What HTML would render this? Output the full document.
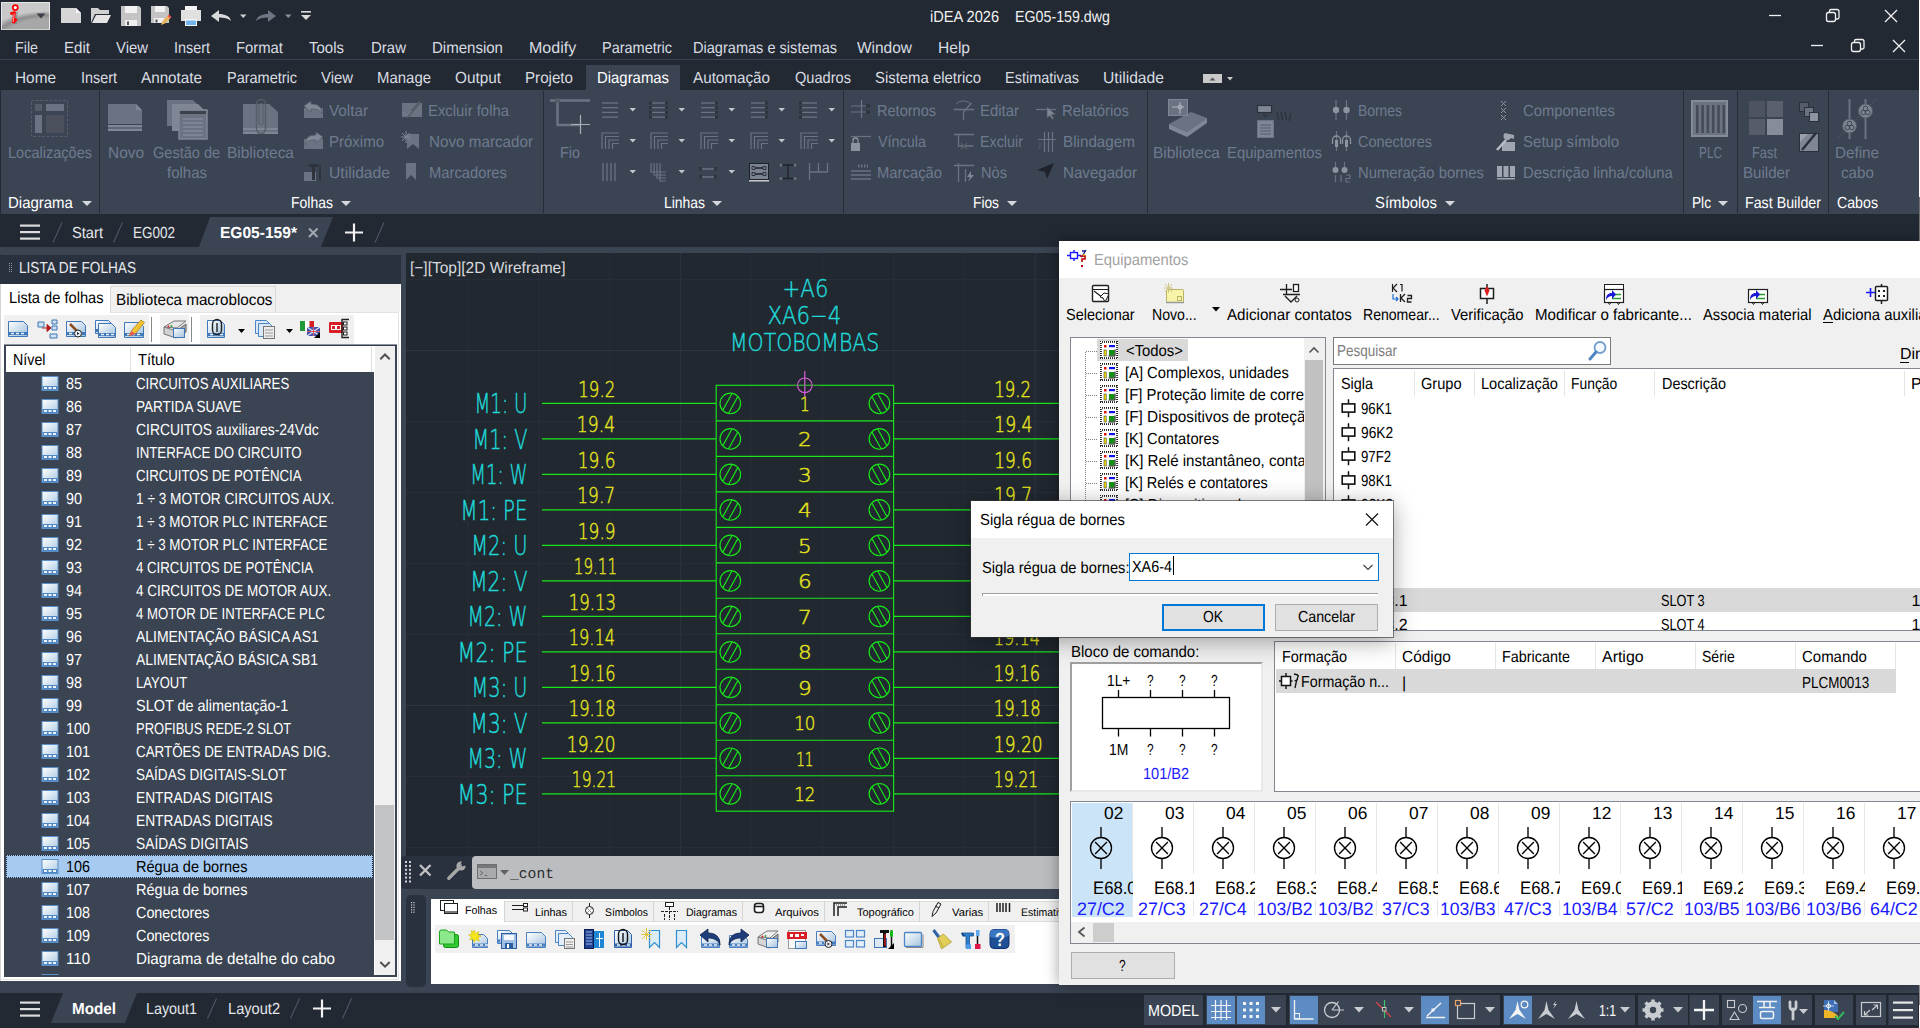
<!DOCTYPE html>
<html lang="pt"><head><meta charset="utf-8"><title>iDEA 2026 - EG05-159.dwg</title>
<style>
html,body{margin:0;padding:0;background:#222933;}
body{width:1920px;height:1028px;overflow:hidden;position:relative;font-family:"Liberation Sans",sans-serif;}
#app{position:absolute;left:0;top:0;width:1920px;height:1028px;overflow:hidden;background:#222933;}
#app div,#app svg,#app span.t{position:absolute;box-sizing:border-box;}
span.t{white-space:pre;display:block;transform-origin:0 50%;text-rendering:geometricPrecision;}
svg{overflow:visible;}
svg text{font-family:"Liberation Sans",sans-serif;}
svg text.cad{font-family:"DejaVu Sans","Liberation Sans",sans-serif;font-weight:200;}
</style></head><body><div id="app">
<div style="left:0px;top:0px;width:1920px;height:1028px;background:#222933;"></div>
<div style="left:1px;top:2px;width:49px;height:27.500px;border:1px solid #e6e6e6;border-bottom-color:#cfcfcf;background:radial-gradient(ellipse 60px 26px at 46px 34px,#a6a6a6 0%,#a8a8a8 70%,#8e8e8e 84%,#c9c9c9 100%),#dedede;"></div>
<svg style="left:0px;top:0px;" width="320" height="34" viewBox="0 0 320 34">
<path d="M12 14.5l4.5 -1.2-1.2 10.5" fill="none" stroke="#707070" stroke-width="3" opacity=".45"/>
<circle cx="15.3" cy="7.6" r="2.5" fill="#ffffff" stroke="#ff0000" stroke-width="1.7"/>
<path d="M10.3 13.8l4.2 -1.3-1.3 10.7M13.2 23l3.300-4.200" fill="none" stroke="#ff0000" stroke-width="2.6" stroke-linejoin="round"/><path d="M14.2 13.5l-1 8.5" stroke="#ffd0d0" stroke-width=".8"/>
<path d="M36.5 13.5h9l-4.5 5z" fill="#3a3f4a"/>
<!-- new -->
<path d="M61 8h15l5 5v10h-20z" fill="#d6d6d6"/><path d="M76 8v5h5z" fill="#f4f4f4"/>
<!-- open -->
<path d="M91 8h7l2 2h9v4h-14l-4 9z" fill="#d0d0d0"/><path d="M96 15h15l-4 8h-15z" fill="#e4e4e4"/>
<!-- save -->
<path d="M121 6h18l2 2v18h-20z" fill="#c4c4c4"/><rect x="125" y="6" width="12" height="7" fill="#f2f2f2"/><rect x="125" y="20" width="12" height="6" fill="#efefef"/><rect x="127" y="21.5" width="2" height="3.5" fill="#555"/>
<!-- save as -->
<path d="M151 6h16l2 2v15h-18z" fill="#c4c4c4"/><rect x="155" y="6" width="10" height="6" fill="#f2f2f2"/><rect x="154" y="18" width="10" height="5" fill="#efefef"/><rect x="155.500" y="19.500" width="2" height="3" fill="#555"/>
<path d="M161 25l1.500-4 6-6 2.500 2.500-6 6z" fill="#e9b660"/><path d="M167.500 16l1.500-1.500 2.500 2.500-1.500 1.500z" fill="#e8504c"/>
<!-- print -->
<rect x="185" y="6" width="12" height="5" fill="#f4f4f4"/><path d="M181 10h20v11h-20z" fill="#e0e0e0"/><rect x="185" y="19" width="12" height="7" fill="#f6f6f6"/><rect x="186" y="20.500" width="10" height="4.500" fill="#6fb4f0"/>
<!-- undo -->
<path d="M211 16l8-6v4c6 0 11 2 12 7-3-3-7-3.500-12-3.500v4.500z" fill="#d9d9d9"/>
<path d="M240 14.500h6.500l-3.250 3.500z" fill="#cfcfcf"/>
<!-- redo -->
<path d="M276 16l-8-6v4c-6 0-11 2-12 7 3-3 7-3.500 12-3.500v4.500z" fill="#6e7683"/>
<path d="M285 14.500h6.500l-3.250 3.500z" fill="#8a909b"/>
<!-- customize -->
<rect x="301" y="11" width="10" height="1.600" fill="#d9d9d9"/><path d="M301 15h10l-5 5z" fill="#d9d9d9"/>
</svg>
<span class="t" style="left:930px;top:10px;font-size:16px;line-height:16px;color:#f0f0f0;transform:scaleX(0.913);">iDEA 2026</span>
<span class="t" style="left:1015px;top:10px;font-size:16px;line-height:16px;color:#f0f0f0;transform:scaleX(0.89);">EG05-159.dwg</span>
<svg style="left:1760px;top:0px;" width="160" height="62" viewBox="0 0 160 62"><g stroke="#f2f2f2" stroke-width="1.3" fill="none">
<path d="M9 15.500h12"/>
<rect x="66.500" y="12.500" width="9" height="9" rx="2"/><path d="M69.500 12.500v-1.500a1.500 1.500 0 0 1 1.500-1.500h6a2 2 0 0 1 2 2v6a1.500 1.500 0 0 1 -1.500 1.500h-1.500"/>
<path d="M125 10l12 12M137 10l-12 12"/>
<path d="M51 45.500h12"/>
<rect x="91.500" y="42.500" width="9" height="9" rx="2"/><path d="M94.500 42.500v-1.500a1.500 1.500 0 0 1 1.500-1.500h6a2 2 0 0 1 2 2v6a1.500 1.500 0 0 1 -1.500 1.500h-1.500"/>
<path d="M133 40l12 12M145 40l-12 12"/>
</g></svg>
<span class="t" style="left:15px;top:41px;font-size:16px;line-height:16px;color:#d9dce1;transform:scaleX(0.893);">File</span>
<span class="t" style="left:64px;top:41px;font-size:16px;line-height:16px;color:#d9dce1;transform:scaleX(0.942);">Edit</span>
<span class="t" style="left:116px;top:41px;font-size:16px;line-height:16px;color:#d9dce1;transform:scaleX(0.929);">View</span>
<span class="t" style="left:174px;top:41px;font-size:16px;line-height:16px;color:#d9dce1;transform:scaleX(0.899);">Insert</span>
<span class="t" style="left:236px;top:41px;font-size:16px;line-height:16px;color:#d9dce1;transform:scaleX(0.927);">Format</span>
<span class="t" style="left:309px;top:41px;font-size:16px;line-height:16px;color:#d9dce1;transform:scaleX(0.937);">Tools</span>
<span class="t" style="left:371px;top:41px;font-size:16px;line-height:16px;color:#d9dce1;transform:scaleX(0.936);">Draw</span>
<span class="t" style="left:432px;top:41px;font-size:16px;line-height:16px;color:#d9dce1;transform:scaleX(0.939);">Dimension</span>
<span class="t" style="left:529px;top:41px;font-size:16px;line-height:16px;color:#d9dce1;">Modify</span>
<span class="t" style="left:602px;top:41px;font-size:16px;line-height:16px;color:#d9dce1;transform:scaleX(0.905);">Parametric</span>
<span class="t" style="left:693px;top:41px;font-size:16px;line-height:16px;color:#d9dce1;transform:scaleX(0.91);">Diagramas e sistemas</span>
<span class="t" style="left:857px;top:41px;font-size:16px;line-height:16px;color:#d9dce1;transform:scaleX(0.966);">Window</span>
<span class="t" style="left:938px;top:41px;font-size:16px;line-height:16px;color:#d9dce1;transform:scaleX(0.973);">Help</span>
<div style="left:0px;top:59px;width:1920px;height:1px;background:#3a4352;"></div>
<div style="left:586px;top:65px;width:94px;height:26px;background:#3b4453;"></div>
<span class="t" style="left:15px;top:71px;font-size:16px;line-height:16px;color:#d9dce1;transform:scaleX(0.961);">Home</span>
<span class="t" style="left:81px;top:71px;font-size:16px;line-height:16px;color:#d9dce1;transform:scaleX(0.899);">Insert</span>
<span class="t" style="left:141px;top:71px;font-size:16px;line-height:16px;color:#d9dce1;transform:scaleX(0.952);">Annotate</span>
<span class="t" style="left:227px;top:71px;font-size:16px;line-height:16px;color:#d9dce1;transform:scaleX(0.905);">Parametric</span>
<span class="t" style="left:321px;top:71px;font-size:16px;line-height:16px;color:#d9dce1;transform:scaleX(0.929);">View</span>
<span class="t" style="left:377px;top:71px;font-size:16px;line-height:16px;color:#d9dce1;transform:scaleX(0.934);">Manage</span>
<span class="t" style="left:455px;top:71px;font-size:16px;line-height:16px;color:#d9dce1;transform:scaleX(0.957);">Output</span>
<span class="t" style="left:525px;top:71px;font-size:16px;line-height:16px;color:#d9dce1;transform:scaleX(0.947);">Projeto</span>
<span class="t" style="left:597px;top:71px;font-size:16px;line-height:16px;color:#ffffff;transform:scaleX(0.931);">Diagramas</span>
<span class="t" style="left:693px;top:71px;font-size:16px;line-height:16px;color:#d9dce1;transform:scaleX(0.952);">Automação</span>
<span class="t" style="left:795px;top:71px;font-size:16px;line-height:16px;color:#d9dce1;transform:scaleX(0.912);">Quadros</span>
<span class="t" style="left:875px;top:71px;font-size:16px;line-height:16px;color:#d9dce1;transform:scaleX(0.931);">Sistema eletrico</span>
<span class="t" style="left:1005px;top:71px;font-size:16px;line-height:16px;color:#d9dce1;transform:scaleX(0.905);">Estimativas</span>
<span class="t" style="left:1103px;top:71px;font-size:16px;line-height:16px;color:#d9dce1;transform:scaleX(0.98);">Utilidade</span>
<svg style="left:1200px;top:70px;" width="40" height="16" viewBox="0 0 40 16"><rect x="3" y="4" width="19" height="9" fill="#c9c9c9"/><path d="M9.500 10.500l3-3 3 3z" fill="#555"/><path d="M27 7h6l-3 3.500z" fill="#c9c9c9"/></svg>
<div style="left:1px;top:90px;width:1918px;height:124px;background:#3b4453;"></div>
<div style="left:99px;top:91px;width:1px;height:122px;background:#262c36;"></div>
<div style="left:543px;top:91px;width:1px;height:122px;background:#262c36;"></div>
<div style="left:843px;top:91px;width:1px;height:122px;background:#262c36;"></div>
<div style="left:1147px;top:91px;width:1px;height:122px;background:#262c36;"></div>
<div style="left:1683px;top:91px;width:1px;height:122px;background:#262c36;"></div>
<div style="left:1737px;top:91px;width:1px;height:122px;background:#262c36;"></div>
<div style="left:1828px;top:91px;width:1px;height:122px;background:#262c36;"></div>
<span class="t" style="left:8px;top:196px;font-size:16px;line-height:16px;color:#ffffff;transform:scaleX(0.936);">Diagrama</span>
<span class="t" style="left:291px;top:196px;font-size:16px;line-height:16px;color:#ffffff;transform:scaleX(0.874);">Folhas</span>
<span class="t" style="left:664px;top:196px;font-size:16px;line-height:16px;color:#ffffff;transform:scaleX(0.869);">Linhas</span>
<span class="t" style="left:973px;top:196px;font-size:16px;line-height:16px;color:#ffffff;transform:scaleX(0.86);">Fios</span>
<span class="t" style="left:1375px;top:196px;font-size:16px;line-height:16px;color:#ffffff;transform:scaleX(0.929);">Símbolos</span>
<span class="t" style="left:1692px;top:196px;font-size:16px;line-height:16px;color:#ffffff;transform:scaleX(0.855);">Plc</span>
<span class="t" style="left:1745px;top:196px;font-size:16px;line-height:16px;color:#ffffff;transform:scaleX(0.89);">Fast Builder</span>
<span class="t" style="left:1837px;top:196px;font-size:16px;line-height:16px;color:#ffffff;transform:scaleX(0.886);">Cabos</span>
<svg style="left:0px;top:0px;pointer-events:none;" width="1920" height="214" viewBox="0 0 1920 214"><path d="M82 201h10l-5.0 5z" fill="#d4d7dc"/><path d="M341 201h10l-5.0 5z" fill="#d4d7dc"/><path d="M712 201h10l-5.0 5z" fill="#d4d7dc"/><path d="M1007 201h10l-5.0 5z" fill="#d4d7dc"/><path d="M1445 201h10l-5.0 5z" fill="#d4d7dc"/><path d="M1718 201h10l-5.0 5z" fill="#d4d7dc"/></svg>
<span class="t" style="left:8px;top:146px;font-size:16px;line-height:16px;color:#6e7b8f;transform:scaleX(0.908);">Localizações</span>
<span class="t" style="left:108px;top:146px;font-size:16px;line-height:16px;color:#6e7b8f;transform:scaleX(0.964);">Novo</span>
<span class="t" style="left:153px;top:146px;font-size:16px;line-height:16px;color:#6e7b8f;transform:scaleX(0.908);">Gestão de</span>
<span class="t" style="left:167px;top:166px;font-size:16px;line-height:16px;color:#6e7b8f;transform:scaleX(0.937);">folhas</span>
<span class="t" style="left:227px;top:146px;font-size:16px;line-height:16px;color:#6e7b8f;transform:scaleX(0.965);">Biblioteca</span>
<span class="t" style="left:560px;top:146px;font-size:16px;line-height:16px;color:#6e7b8f;transform:scaleX(0.9);">Fio</span>
<span class="t" style="left:1153px;top:146px;font-size:16px;line-height:16px;color:#6e7b8f;transform:scaleX(0.965);">Biblioteca</span>
<span class="t" style="left:1227px;top:146px;font-size:16px;line-height:16px;color:#6e7b8f;transform:scaleX(0.929);">Equipamentos</span>
<span class="t" style="left:1699px;top:146px;font-size:16px;line-height:16px;color:#6e7b8f;transform:scaleX(0.74);">PLC</span>
<span class="t" style="left:1752px;top:146px;font-size:16px;line-height:16px;color:#6e7b8f;transform:scaleX(0.802);">Fast</span>
<span class="t" style="left:1743px;top:166px;font-size:16px;line-height:16px;color:#6e7b8f;transform:scaleX(0.943);">Builder</span>
<span class="t" style="left:1835px;top:146px;font-size:16px;line-height:16px;color:#6e7b8f;transform:scaleX(0.952);">Define</span>
<span class="t" style="left:1841px;top:166px;font-size:16px;line-height:16px;color:#6e7b8f;transform:scaleX(0.951);">cabo</span>
<span class="t" style="left:329px;top:104px;font-size:16px;line-height:16px;color:#6e7b8f;transform:scaleX(0.952);">Voltar</span>
<span class="t" style="left:329px;top:135px;font-size:16px;line-height:16px;color:#6e7b8f;transform:scaleX(0.937);">Próximo</span>
<span class="t" style="left:329px;top:166px;font-size:16px;line-height:16px;color:#6e7b8f;transform:scaleX(0.98);">Utilidade</span>
<span class="t" style="left:428px;top:104px;font-size:16px;line-height:16px;color:#6e7b8f;transform:scaleX(0.929);">Excluir folha</span>
<span class="t" style="left:429px;top:135px;font-size:16px;line-height:16px;color:#6e7b8f;transform:scaleX(0.951);">Novo marcador</span>
<span class="t" style="left:429px;top:166px;font-size:16px;line-height:16px;color:#6e7b8f;transform:scaleX(0.923);">Marcadores</span>
<span class="t" style="left:877px;top:104px;font-size:16px;line-height:16px;color:#6e7b8f;transform:scaleX(0.909);">Retornos</span>
<span class="t" style="left:878px;top:135px;font-size:16px;line-height:16px;color:#6e7b8f;transform:scaleX(0.898);">Víncula</span>
<span class="t" style="left:877px;top:166px;font-size:16px;line-height:16px;color:#6e7b8f;transform:scaleX(0.926);">Marcação</span>
<span class="t" style="left:980px;top:104px;font-size:16px;line-height:16px;color:#6e7b8f;transform:scaleX(0.932);">Editar</span>
<span class="t" style="left:980px;top:135px;font-size:16px;line-height:16px;color:#6e7b8f;transform:scaleX(0.895);">Excluir</span>
<span class="t" style="left:981px;top:166px;font-size:16px;line-height:16px;color:#6e7b8f;transform:scaleX(0.914);">Nòs</span>
<span class="t" style="left:1062px;top:104px;font-size:16px;line-height:16px;color:#6e7b8f;transform:scaleX(0.93);">Relatórios</span>
<span class="t" style="left:1063px;top:135px;font-size:16px;line-height:16px;color:#6e7b8f;transform:scaleX(0.952);">Blindagem</span>
<span class="t" style="left:1063px;top:166px;font-size:16px;line-height:16px;color:#6e7b8f;transform:scaleX(0.945);">Navegador</span>
<span class="t" style="left:1358px;top:104px;font-size:16px;line-height:16px;color:#6e7b8f;transform:scaleX(0.868);">Bornes</span>
<span class="t" style="left:1358px;top:135px;font-size:16px;line-height:16px;color:#6e7b8f;transform:scaleX(0.904);">Conectores</span>
<span class="t" style="left:1358px;top:166px;font-size:16px;line-height:16px;color:#6e7b8f;transform:scaleX(0.926);">Numeração bornes</span>
<span class="t" style="left:1523px;top:104px;font-size:16px;line-height:16px;color:#6e7b8f;transform:scaleX(0.923);">Componentes</span>
<span class="t" style="left:1523px;top:135px;font-size:16px;line-height:16px;color:#6e7b8f;transform:scaleX(0.939);">Setup símbolo</span>
<span class="t" style="left:1523px;top:166px;font-size:16px;line-height:16px;color:#6e7b8f;transform:scaleX(0.931);">Descrição linha/coluna</span>
<svg style="left:0px;top:0px;" width="1920" height="214" viewBox="0 0 1920 214"><rect x="31.500" y="100.500" width="36" height="36" fill="none" stroke="#555c6a" stroke-dasharray="3 1.500"/><rect x="35" y="104" width="7" height="7" fill="#555c6a"/><rect x="46" y="104" width="18" height="7" fill="#6b7383"/><rect x="35" y="115" width="7" height="18" fill="#6b7383"/><rect x="46" y="115" width="18" height="18" fill="#4a505c"/><path d="M108 104h28l6 6v14h-34z" fill="#6b7383"/><path d="M136 104v6h6z" fill="#7f8796"/><rect x="108" y="125" width="34" height="2.500" fill="#7f8796"/><rect x="108" y="128.500" width="34" height="2.500" fill="#7f8796"/><path d="M167 100h26l5 5v21h-31z" fill="#6b7383"/><path d="M172 104h26l5 5v22h-31z" fill="#7f8796"/><rect x="179" y="110" width="28" height="29" fill="#6b7383" stroke="#7f8796" stroke-width="1.500"/><rect x="180" y="111" width="26" height="3" fill="#3c414c"/><g stroke="#8d95a3" stroke-width="1.200"><path d="M183 119h20M183 123h20M183 127h20M183 131h20M183 135h20"/></g><path d="M243 104h26l9 8v22h-35z" fill="#6b7383"/><rect x="243" y="128" width="35" height="2" fill="#7f8796"/><rect x="243" y="132" width="35" height="2" fill="#7f8796"/><rect x="256.500" y="99.500" width="9" height="34" rx="4.500" fill="none" stroke="#555c6a" stroke-width="1.500"/><rect x="259" y="103" width="4" height="22" rx="2" fill="none" stroke="#555c6a"/><rect x="304" y="108" width="19" height="10" fill="#6b7383"/><path d="M304 106l7-5v3c7 0 11 3 11 10-2-4-5-5-11-5v3z" fill="#7f8796" stroke="#555c6a" stroke-width=".800"/><rect x="304" y="139" width="19" height="10" fill="#6b7383"/><path d="M323 137l-7-5v3c-7 0-11 3-11 10 2-4 5-5 11-5v3z" fill="#7f8796" stroke="#555c6a" stroke-width=".800"/><rect x="304" y="172" width="12" height="9" fill="#6b7383"/><path d="M309 164h9v3h-3v13h-3v-13h-3z" fill="#2e333d"/><path d="M320 165v15" stroke="#2e333d" stroke-width="2"/><rect x="402" y="103" width="20" height="14" fill="#6b7383"/><path d="M405 117l14-16 2 2-13 15z" fill="#555c6a"/><path d="M403 112l4 4 4-5" stroke="#7f8796" fill="none"/><path d="M407 134h12v15l-6-5-6 5z" fill="#6b7383"/><path d="M402 133l8 8M410 133l-8 8M406 131v12M401 137h10" stroke="#7f8796" stroke-width="1"/><path d="M406 163h10v17l-5-5-5 5z" fill="#6b7383"/><path d="M550 100.500h40M557.500 100v25h23" stroke="#6b7383" stroke-width="2.500" fill="none"/><circle cx="557.500" cy="100.500" r="2.500" fill="#555c6a"/><path d="M580.500 115v19M571 124.500h19" stroke="#a9aeb8" stroke-width="1.200"/><g stroke="#6b7383" stroke-width="1.300"><path d="M602 103.0h16"/><path d="M602 107.7h16"/><path d="M602 112.4h16"/><path d="M602 117.1h16"/></g><path d="M629.5 108h6.5l-3.25 3.5z" fill="#c3c7cd"/><g stroke="#6b7383" stroke-width="1.300"><path d="M651 103.0h16"/><path d="M651 107.7h16"/><path d="M651 112.4h16"/><path d="M651 117.1h16"/></g><rect x="649" y="101.5" width="3" height="3" fill="#2e333d"/><rect x="649" y="106.2" width="3" height="3" fill="#2e333d"/><rect x="649" y="110.9" width="3" height="3" fill="#2e333d"/><rect x="649" y="115.6" width="3" height="3" fill="#2e333d"/><rect x="665" y="101.5" width="3" height="3" fill="#2e333d"/><rect x="665" y="106.2" width="3" height="3" fill="#2e333d"/><rect x="665" y="110.9" width="3" height="3" fill="#2e333d"/><rect x="665" y="115.6" width="3" height="3" fill="#2e333d"/><path d="M678.5 108h6.5l-3.25 3.5z" fill="#c3c7cd"/><g stroke="#6b7383" stroke-width="1.300"><path d="M701 103.0h16"/><path d="M701 107.7h16"/><path d="M701 112.4h16"/><path d="M701 117.1h16"/></g><rect x="715" y="101.5" width="3" height="3" fill="#2e333d"/><rect x="715" y="106.2" width="3" height="3" fill="#2e333d"/><rect x="715" y="110.9" width="3" height="3" fill="#2e333d"/><rect x="715" y="115.6" width="3" height="3" fill="#2e333d"/><path d="M728.5 108h6.5l-3.25 3.5z" fill="#c3c7cd"/><g stroke="#6b7383" stroke-width="1.300"><path d="M751 103.0h16"/><path d="M751 107.7h16"/><path d="M751 112.4h16"/><path d="M751 117.1h16"/></g><rect x="765" y="101.5" width="3" height="3" fill="#2e333d"/><rect x="765" y="106.2" width="3" height="3" fill="#2e333d"/><rect x="765" y="110.9" width="3" height="3" fill="#2e333d"/><rect x="765" y="115.6" width="3" height="3" fill="#2e333d"/><path d="M778.5 108h6.5l-3.25 3.5z" fill="#c3c7cd"/><g stroke="#6b7383" stroke-width="1.300"><path d="M801 103.0h16"/><path d="M801 107.7h16"/><path d="M801 112.4h16"/><path d="M801 117.1h16"/></g><rect x="799" y="101.5" width="3" height="3" fill="#2e333d"/><rect x="799" y="106.2" width="3" height="3" fill="#2e333d"/><rect x="799" y="110.9" width="3" height="3" fill="#2e333d"/><rect x="799" y="115.6" width="3" height="3" fill="#2e333d"/><path d="M828.5 108h6.5l-3.25 3.5z" fill="#c3c7cd"/><g stroke="#6b7383" stroke-width="1.200" fill="none"><path d="M619 133.0h-17.0v16.0"/><path d="M619 136.5h-13.5v12.5"/><path d="M619 140.0h-10.0v9.0"/><path d="M619 143.5h-6.5v5.5"/></g><path d="M629.5 139h6.5l-3.25 3.5z" fill="#c3c7cd"/><g stroke="#6b7383" stroke-width="1.200" fill="none"><path d="M668 133.0h-17.0v16.0"/><path d="M668 136.5h-13.5v12.5"/><path d="M668 140.0h-10.0v9.0"/><path d="M668 143.5h-6.5v5.5"/></g><path d="M678.5 139h6.5l-3.25 3.5z" fill="#c3c7cd"/><g stroke="#6b7383" stroke-width="1.200" fill="none"><path d="M718 133.0h-17.0v16.0"/><path d="M718 136.5h-13.5v12.5"/><path d="M718 140.0h-10.0v9.0"/><path d="M718 143.5h-6.5v5.5"/></g><path d="M728.5 139h6.5l-3.25 3.5z" fill="#c3c7cd"/><g stroke="#6b7383" stroke-width="1.200" fill="none"><path d="M768 133.0h-17.0v16.0"/><path d="M768 136.5h-13.5v12.5"/><path d="M768 140.0h-10.0v9.0"/><path d="M768 143.5h-6.5v5.5"/></g><path d="M778.5 139h6.5l-3.25 3.5z" fill="#c3c7cd"/><g stroke="#6b7383" stroke-width="1.200" fill="none"><path d="M818 133.0h-17.0v16.0"/><path d="M818 136.5h-13.5v12.5"/><path d="M818 140.0h-10.0v9.0"/><path d="M818 143.5h-6.5v5.5"/></g><path d="M828.5 139h6.5l-3.25 3.5z" fill="#c3c7cd"/><g stroke="#6b7383" stroke-width="1.300"><path d="M603 163v18"/><path d="M607 163v18"/><path d="M611 163v18"/><path d="M615 163v18"/></g><path d="M629.5 170h6.5l-3.25 3.5z" fill="#c3c7cd"/><g stroke="#6b7383" stroke-width="1.200" fill="none"><path d="M651 163v9h15"/><path d="M654 163v12h12"/><path d="M657 163v15h9"/><path d="M660 163v18h6"/></g><path d="M678.5 170h6.5l-3.25 3.5z" fill="#c3c7cd"/><path d="M700 169h17M700 177h17" stroke="#6b7383" stroke-width="1.300"/><rect x="699" y="167" width="3" height="3.500" fill="#2e333d"/><rect x="714" y="167" width="3" height="3.500" fill="#2e333d"/><rect x="699" y="175" width="3" height="3.500" fill="#2e333d"/><rect x="714" y="175" width="3" height="3.500" fill="#2e333d"/><path d="M728.5 170h6.5l-3.25 3.5z" fill="#c3c7cd"/><rect x="749.500" y="163.500" width="19" height="16" fill="#7b8392" stroke="#1d2129" stroke-width="1"/><path d="M752 168h14M752 174h14" stroke="#1d2129" stroke-width="1.500"/><rect x="749" y="180" width="20" height="1.500" fill="#c8ccd2"/><path d="M752 166.500h3v3h-3zM763 166.500h3v3h-3zM752 172.500h3v3h-3zM763 172.500h3v3h-3z" fill="#7b8392" stroke="#1d2129" stroke-width=".800"/><path d="M780 165h16M780 178.500h16M788 165v13.500" stroke="#1f232b" stroke-width="1.300"/><circle cx="781" cy="165" r="1.500" fill="#6b7383"/><circle cx="795" cy="165" r="1.500" fill="#6b7383"/><circle cx="781" cy="178.500" r="1.500" fill="#6b7383"/><circle cx="795" cy="178.500" r="1.500" fill="#6b7383"/><path d="M809.500 163v17M809.500 172h18M818.500 163v9M827.500 163v9" stroke="#6b7383" stroke-width="1.300" fill="none"/><path d="M851 106h18M851 112h18M861.500 100v18" stroke="#6b7383" stroke-width="1.200"/><rect x="866" y="104.500" width="4" height="3" fill="#2e333d"/><rect x="866" y="110.500" width="4" height="3" fill="#2e333d"/><path d="M851 136.500h20" stroke="#6b7383" stroke-width="1.200"/><rect x="851" y="143" width="9" height="8" fill="#8b92a0"/><path d="M853 143v-2.500a2.500 2.500 0 0 1 5 0v2.500" stroke="#8b92a0" fill="none" stroke-width="1.300"/><path d="M851 171h20M851 175h20M851 179h20" stroke="#6b7383" stroke-width="1.300"/><path d="M858 166h10" stroke="#6b7383" stroke-width="3" stroke-dasharray="1.500 1.500"/><path d="M954 109.500h20M963.500 120v-8l8-9" stroke="#6b7383" stroke-width="1.300" fill="none"/><path d="M956 104c4-4 10-4 15 0" stroke="#6b7383" fill="none"/><path d="M954 134.500h20M958.500 134v12h15" stroke="#6b7383" stroke-width="1.300" fill="none"/><path d="M961 143l6 6M967 143l-6 6" stroke="#555c6a" stroke-width="1.300"/><path d="M954 165.500h20M958.500 163v19M965.500 169v13" stroke="#6b7383" stroke-width="1.300" fill="none"/><path d="M971 171l-4 6h3l-2 5 6-7h-3z" fill="#7f8796"/><path d="M1036 109.500h20" stroke="#6b7383" stroke-width="1.200"/><path d="M1047 107v11l3-2.500 2 4 1.500-1-2-4h4z" fill="#7f8796" stroke="#4c5260" stroke-width=".600"/><path d="M1044.500 132v20M1048.500 132v20M1052.500 132v20M1038 139.500h18" stroke="#6b7383" stroke-width="1.200"/><path d="M1040 142v5l-2 2" stroke="#555c6a" fill="none"/><path d="M1037 170l17-7-7 16-2-7z" fill="#1f232b"/><path d="M1169 124l22-12 16 6-20 14z" fill="#6b7383"/><path d="M1169 124v5l18 8v-5zM1187 132v5l20-14v-5z" fill="#7f8796"/><rect x="1168.500" y="99.500" width="19" height="16" fill="#6b7383" stroke="#7f8796"/><path d="M1172 107h12M1180 102v12" stroke="#9aa1ad" stroke-width="1.500"/><circle cx="1180" cy="107" r="2" fill="none" stroke="#b5bac3"/><rect x="1257.500" y="105.500" width="14" height="7" fill="#7f8796" stroke="#2b303a" stroke-width="1.200"/><path d="M1264 113v3h4" stroke="#2b303a" fill="none"/><path d="M1277 112l1.500 8M1281 112l1.500 8M1285 112l1.500 8M1291 113l-2 8" stroke="#2b303a" stroke-width="1.200"/><rect x="1257.500" y="120.500" width="16" height="17" fill="#7f8796" stroke="#6b7383"/><path d="M1260 125h11M1260 128h11M1260 131h11M1260 134h11" stroke="#555c6a"/><path d="M1336 100v20M1346.500 100v20" stroke="#6b7383" stroke-width="1.200"/><circle cx="1336" cy="110" r="3.200" fill="#8c93a1"/><circle cx="1346.500" cy="110" r="3.200" fill="#8c93a1"/><path d="M1336.500 131v20M1346.500 131v20" stroke="#6b7383" stroke-width="1.200"/><path d="M1332.500 144v-4a4 4 0 0 1 8 0v4M1342.500 144v-4a4 4 0 0 1 8 0v4" stroke="#8c93a1" fill="none" stroke-width="1.300"/><rect x="1335" y="140" width="3" height="7" fill="#8c93a1"/><rect x="1345" y="140" width="3" height="7" fill="#8c93a1"/><path d="M1335.500 162v8M1344.500 162v8" stroke="#6b7383" stroke-width="1.200"/><circle cx="1335.500" cy="170" r="3" fill="#8c93a1"/><circle cx="1344.500" cy="170" r="3" fill="#8c93a1"/><path d="M1335.500 175v7M1341 175v7M1346 175h4v3.500h-4v3.500h4" stroke="#6b7383" stroke-width="1.200" fill="none"/><path d="M1501 101l5 5M1506 101l-5 5M1501 108l5 5M1506 108l-5 5M1501 115l5 5M1506 115l-5 5" stroke="#8d94a1" stroke-width="1"/><rect x="1502" y="142" width="13" height="9" fill="#a0a6b1"/><path d="M1497 150l9-10" stroke="#b9bec6" stroke-width="2.500"/><path d="M1505 133a4 4 0 1 0 6 5l3 1v-4z" fill="#a0a6b1"/><rect x="1497" y="166" width="5" height="11" fill="#a0a6b1"/><rect x="1503.500" y="166" width="5" height="11" fill="#a0a6b1"/><rect x="1510" y="166" width="5" height="11" fill="#a0a6b1"/><rect x="1497" y="178" width="18" height="1.500" fill="#a0a6b1"/><rect x="1692" y="101" width="35" height="35" fill="#6b7383" stroke="#848b99" stroke-width="2"/><rect x="1696.0" y="105" width="2.600" height="28" fill="#454b57"/><rect x="1701.3" y="105" width="2.600" height="28" fill="#454b57"/><rect x="1706.6" y="105" width="2.600" height="28" fill="#454b57"/><rect x="1711.9" y="105" width="2.600" height="28" fill="#454b57"/><rect x="1717.2" y="105" width="2.600" height="28" fill="#454b57"/><rect x="1722.5" y="105" width="2.600" height="28" fill="#454b57"/><rect x="1749" y="101" width="16" height="16" fill="#4d5360"/><rect x="1767" y="101" width="16" height="16" fill="#5a606d"/><rect x="1749" y="119" width="16" height="16" fill="#565c69"/><rect x="1767" y="119" width="16" height="16" fill="#868c99"/><rect x="1799.500" y="102.500" width="9" height="9" fill="#555c6a" stroke="#2b303a"/><rect x="1804.500" y="107.500" width="9" height="9" fill="#6b7383" stroke="#2b303a"/><rect x="1809.500" y="112.500" width="9" height="9" fill="#8d94a1" stroke="#2b303a"/><rect x="1799.500" y="133.500" width="19" height="18" fill="#7f8796" stroke="#2b303a"/><path d="M1802 150l14-17" stroke="#2b303a" stroke-width="2.500"/><path d="M1800 134h8l-8 8z" fill="#9aa0ac"/><path d="M1849.500 99v40M1865.500 99v40" stroke="#6b7383" stroke-width="2"/><path d="M1838 138l38-39" stroke="#555c6a" stroke-dasharray="2 1.500"/><circle cx="1849.500" cy="126" r="7" fill="#7d8594" stroke="#555c6a"/><circle cx="1865.500" cy="111" r="7" fill="#7d8594" stroke="#555c6a"/><g fill="none" stroke="#3a404c" stroke-width=".900"><circle cx="1849.500" cy="123.500" r="2.300"/><circle cx="1847.300" cy="127.500" r="2.300"/><circle cx="1851.700" cy="127.500" r="2.300"/><circle cx="1865.500" cy="108.500" r="2.300"/><circle cx="1863.300" cy="112.500" r="2.300"/><circle cx="1867.700" cy="112.500" r="2.300"/></g></svg>
<div style="left:0px;top:247px;width:1920px;height:8px;background:#3b4453;"></div>
<svg style="left:0px;top:214px;" width="420" height="34" viewBox="0 0 420 34"><path d="M210 3h123l-12 30h-122z" fill="#3b4453"/>
<g fill="#dcdcdc"><rect x="20" y="10.500" width="20" height="2.200"/><rect x="20" y="17" width="20" height="2.200"/><rect x="20" y="23.500" width="20" height="2.200"/></g>
<g stroke="#4b5464" stroke-width="1.200"><path d="M53 28.500l9-20M113.500 28.500l9-20M375 28.500l9-20"/></g>
<path d="M309 14.500l8.500 8.500M317.500 14.500l-8.500 8.500" stroke="#a3a8b1" stroke-width="2"/>
<path d="M345 18.500h18M354 9.500v18" stroke="#f2f2f2" stroke-width="2.200"/></svg>
<span class="t" style="left:72px;top:226px;font-size:16px;line-height:16px;color:#e3e6ea;transform:scaleX(0.916);">Start</span>
<span class="t" style="left:133px;top:226px;font-size:16px;line-height:16px;color:#e3e6ea;transform:scaleX(0.843);">EG002</span>
<span class="t" style="left:220px;top:226px;font-size:16px;line-height:16px;color:#ffffff;transform:scaleX(0.972);font-weight:700;">EG05-159*</span>
<div style="left:401px;top:255px;width:5px;height:735px;background:#3b4453;"></div>
<div style="left:0px;top:980px;width:406px;height:10px;background:#3b4453;"></div>
<div style="left:0px;top:255px;width:401px;height:29px;background:#2a313e;border-radius:4px 4px 0 0;"></div>
<svg style="left:7px;top:262px;" width="8" height="12" viewBox="0 0 8 12"><g fill="#8f96a3"><rect x="2" y="1" width="1" height="1"/><rect x="4" y="1" width="1" height="1"/><rect x="2" y="3" width="1" height="1"/><rect x="4" y="3" width="1" height="1"/><rect x="2" y="5" width="1" height="1"/><rect x="4" y="5" width="1" height="1"/><rect x="2" y="7" width="1" height="1"/><rect x="4" y="7" width="1" height="1"/><rect x="2" y="9" width="1" height="1"/><rect x="4" y="9" width="1" height="1"/></g></svg>
<span class="t" style="left:19px;top:261px;font-size:16px;line-height:16px;color:#e8eaed;transform:scaleX(0.851);">LISTA DE FOLHAS</span>
<div style="left:0px;top:284px;width:401px;height:697px;background:#ffffff;"></div>
<div style="left:1px;top:284px;width:399px;height:28px;background:#f0f0f0;"></div>
<div style="left:1px;top:284px;width:110px;height:29px;background:#ffffff;"></div>
<div style="left:110px;top:286px;width:166px;height:26px;background:#f0f0f0;border:1px solid #d9d9d9;border-bottom:none;"></div>
<div style="left:110px;top:312px;width:289px;height:1px;background:#e3e3e3;"></div>
<div style="left:398px;top:312px;width:1px;height:668px;background:#e3e3e3;"></div>
<div style="left:1px;top:979px;width:398px;height:1px;background:#e3e3e3;"></div>
<div style="left:0px;top:284px;width:1px;height:697px;background:#d4d4d4;"></div>
<span class="t" style="left:8.5px;top:291px;font-size:16px;line-height:16px;color:#000;transform:scaleX(0.916);">Lista de folhas</span>
<span class="t" style="left:115.5px;top:293px;font-size:16px;line-height:16px;color:#000;transform:scaleX(0.951);">Biblioteca macroblocos</span>
<div style="left:4px;top:315px;width:145px;height:29px;background:#f0f0f0;"></div>
<div style="left:160px;top:315px;width:29px;height:29px;background:#f0f0f0;"></div>
<div style="left:200px;top:315px;width:154px;height:29px;background:#f0f0f0;"></div>
<div style="left:151px;top:317px;width:1px;height:25px;background:#8a8a8a;"></div>
<div style="left:191px;top:317px;width:1px;height:25px;background:#8a8a8a;"></div>
<svg style="left:0px;top:0px;" width="401" height="346" viewBox="0 0 401 346"><defs><linearGradient id="gsh" x1="0" y1="0" x2="1" y2="1"><stop offset="0" stop-color="#ffffff"/><stop offset="1" stop-color="#9fc0dc"/></linearGradient></defs><path d="M8.5 321.5h15l4 4v11h-19z" fill="url(#gsh)" stroke="#3f77b8"/><path d="M9 333.5h18" stroke="#3f77b8" stroke-width="3"/><path d="M11 333.5h3M16 333.5h3M21 333.5h3" stroke="#e8f1fa" stroke-width="1.500"/><path d="M38 322h6v5h-6zM52 320h5v4h-5zM52 326h5v4h-5zM50 334h7v4h-7z" fill="#cfe2f4" stroke="#3f77b8"/><path d="M42 328l8 0M47 324.500l4 3.500-4 3.500z" stroke="#b01c1c" fill="#b01c1c"/><path d="M66.5 321.5h15l4 4v11h-19z" fill="url(#gsh)" stroke="#3f77b8"/><path d="M67 333.5h18" stroke="#3f77b8" stroke-width="3"/><path d="M69 333.5h3M74 333.5h3M79 333.5h3" stroke="#e8f1fa" stroke-width="1.500"/><path d="M70 324l7 7" stroke="#8a4b1f" stroke-width="2.500"/><circle cx="78" cy="333.500" r="3.500" fill="#e9eef5" stroke="#222"/><path d="M77 332l2.500 1.500-2.500 1.500z" fill="#222"/><path d="M95.5 320.5h13l4 4v9h-17z" fill="url(#gsh)" stroke="#3f77b8"/><path d="M96 330.5h16" stroke="#3f77b8" stroke-width="3"/><path d="M98 330.5h3M103 330.5h3M108 330.5h3" stroke="#e8f1fa" stroke-width="1.500"/><path d="M98.5 323.5h13l4 4v10h-17z" fill="url(#gsh)" stroke="#3f77b8"/><path d="M99 334.5h16" stroke="#3f77b8" stroke-width="3"/><path d="M101 334.5h3M106 334.5h3M111 334.5h3" stroke="#e8f1fa" stroke-width="1.500"/><path d="M124.5 322.5h15l4 4v11h-19z" fill="url(#gsh)" stroke="#3f77b8"/><path d="M125 334.5h18" stroke="#3f77b8" stroke-width="3"/><path d="M127 334.5h3M132 334.5h3M137 334.5h3" stroke="#e8f1fa" stroke-width="1.500"/><path d="M129 336l3 -6 9-10 3.500 2.500-9 11z" fill="#f2c230" stroke="#a5781a" stroke-width=".700"/><path d="M129 336l2.500-5 4 3z" fill="#e85a5a"/><path d="M164 327l10-6h12l-9 7z" fill="#e6e6e6" stroke="#777"/><path d="M164 327v7l12 4v-7z" fill="#d2d2d2" stroke="#777"/><path d="M176 331l10-7v8l-10 6z" fill="#a8a8a8" stroke="#666"/><rect x="173.500" y="328.500" width="11" height="9" fill="url(#gsh)" stroke="#3f77b8"/><circle cx="168.500" cy="326.500" r="1" fill="#d22"/><circle cx="171.500" cy="326" r="1" fill="#2a2"/><path d="M207.5 320.5h13l4 4v13h-17z" fill="url(#gsh)" stroke="#3f77b8"/><path d="M208 334.5h16" stroke="#3f77b8" stroke-width="3"/><path d="M210 334.5h3M215 334.5h3M220 334.5h3" stroke="#e8f1fa" stroke-width="1.500"/><rect x="212.500" y="319.500" width="9" height="15" rx="4.500" fill="none" stroke="#222" stroke-width="1.400"/><path d="M217 323v9" stroke="#222" stroke-width="1.400"/><path d="M238 329h7l-3.500 4z" fill="#000"/><path d="M255.500 320.500h11l4 4v9h-15z" fill="#dbe9f7" stroke="#4a86c8"/><path d="M258.500 323.500h11l4 4v9h-15z" fill="#dbe9f7" stroke="#4a86c8"/><rect x="263.500" y="326.500" width="11" height="12" fill="#eee" stroke="#777"/><path d="M265 330h8M265 333h8M265 336h8" stroke="#999"/><path d="M286 329h7l-3.500 4z" fill="#000"/><rect x="300" y="321" width="5" height="10" fill="#1f9a3a"/><rect x="305" y="321" width="4.500" height="10" fill="#fff"/><rect x="309.500" y="321" width="4.500" height="10" fill="#d81f26"/><rect x="307" y="327" width="13" height="9" fill="#3b4fb0"/><path d="M307 327l13 9M320 327l-13 9M313.500 327v9M307 331.500h13" stroke="#e8e8f4" stroke-width="1.200"/><path d="M313.500 327v9M307 331.500h13" stroke="#d81f26" stroke-width=".700"/><path d="M320 332v6h-6z" fill="#000"/><rect x="329" y="322" width="14" height="11" rx="1" fill="#d81f26"/><rect x="331" y="325" width="10" height="5" fill="#fff"/><rect x="332" y="326" width="3" height="3" fill="#d81f26"/><rect x="337" y="326" width="3" height="3" fill="#d81f26"/><path d="M349 319.500h-7v18h7" fill="none" stroke="#222" stroke-width="1.400"/><rect x="343.500" y="322" width="3.500" height="3" fill="#fff" stroke="#222"/><rect x="343.500" y="327" width="3.500" height="3" fill="#fff" stroke="#222"/><rect x="343.500" y="332" width="3.500" height="3" fill="#fff" stroke="#222"/></svg>
<div style="left:4px;top:344px;width:393px;height:633px;background:#ffffff;border:2px solid #3b4453;border-top-color:#353d4b;"></div>
<div style="left:4px;top:344px;width:393px;height:1px;background:#8e949e;"></div>
<div style="left:6px;top:372px;width:368px;height:603px;background:#3b4453;"></div>
<div style="left:130px;top:347px;width:1px;height:25px;background:#e0e0e0;"></div>
<div style="left:371px;top:347px;width:1px;height:25px;background:#e0e0e0;"></div>
<div style="left:375px;top:346px;width:20px;height:629px;background:#f0f0f0;"></div>
<div style="left:375px;top:805px;width:19px;height:135px;background:#c2c3c4;"></div>
<svg style="left:375px;top:346px;" width="20" height="630" viewBox="0 0 20 630"><path d="M5.300 13.200l4.700-4.700 4.700 4.700" fill="none" stroke="#505050" stroke-width="2"/><path d="M5.300 616l4.700 4.700 4.700-4.700" fill="none" stroke="#505050" stroke-width="2"/></svg>
<span class="t" style="left:12.5px;top:353px;font-size:16px;line-height:16px;color:#000;transform:scaleX(0.892);">Nível</span>
<span class="t" style="left:137.5px;top:353px;font-size:16px;line-height:16px;color:#000;transform:scaleX(0.913);">Título</span>
<span class="t" style="left:66px;top:377px;font-size:16px;line-height:16px;color:#ffffff;transform:scaleX(0.9);">85</span>
<span class="t" style="left:135.5px;top:377px;font-size:16px;line-height:16px;color:#ffffff;transform:scaleX(0.826);">CIRCUITOS AUXILIARES</span>
<span class="t" style="left:66px;top:400px;font-size:16px;line-height:16px;color:#ffffff;transform:scaleX(0.9);">86</span>
<span class="t" style="left:135.5px;top:400px;font-size:16px;line-height:16px;color:#ffffff;transform:scaleX(0.846);">PARTIDA SUAVE</span>
<span class="t" style="left:66px;top:423px;font-size:16px;line-height:16px;color:#ffffff;transform:scaleX(0.9);">87</span>
<span class="t" style="left:135.5px;top:423px;font-size:16px;line-height:16px;color:#ffffff;transform:scaleX(0.868);">CIRCUITOS auxiliares-24Vdc</span>
<span class="t" style="left:66px;top:446px;font-size:16px;line-height:16px;color:#ffffff;transform:scaleX(0.9);">88</span>
<span class="t" style="left:135.5px;top:446px;font-size:16px;line-height:16px;color:#ffffff;transform:scaleX(0.829);">INTERFACE DO CIRCUITO</span>
<span class="t" style="left:66px;top:469px;font-size:16px;line-height:16px;color:#ffffff;transform:scaleX(0.9);">89</span>
<span class="t" style="left:135.5px;top:469px;font-size:16px;line-height:16px;color:#ffffff;transform:scaleX(0.825);">CIRCUITOS DE POTÊNCIA</span>
<span class="t" style="left:66px;top:492px;font-size:16px;line-height:16px;color:#ffffff;transform:scaleX(0.9);">90</span>
<span class="t" style="left:135.5px;top:492px;font-size:16px;line-height:16px;color:#ffffff;transform:scaleX(0.854);">1 ÷ 3 MOTOR CIRCUITOS AUX.</span>
<span class="t" style="left:66px;top:515px;font-size:16px;line-height:16px;color:#ffffff;transform:scaleX(0.9);">91</span>
<span class="t" style="left:135.5px;top:515px;font-size:16px;line-height:16px;color:#ffffff;transform:scaleX(0.836);">1 ÷ 3 MOTOR PLC INTERFACE</span>
<span class="t" style="left:66px;top:538px;font-size:16px;line-height:16px;color:#ffffff;transform:scaleX(0.9);">92</span>
<span class="t" style="left:135.5px;top:538px;font-size:16px;line-height:16px;color:#ffffff;transform:scaleX(0.836);">1 ÷ 3 MOTOR PLC INTERFACE</span>
<span class="t" style="left:66px;top:561px;font-size:16px;line-height:16px;color:#ffffff;transform:scaleX(0.9);">93</span>
<span class="t" style="left:135.5px;top:561px;font-size:16px;line-height:16px;color:#ffffff;transform:scaleX(0.828);">4 CIRCUITOS DE POTÊNCIA</span>
<span class="t" style="left:66px;top:584px;font-size:16px;line-height:16px;color:#ffffff;transform:scaleX(0.9);">94</span>
<span class="t" style="left:135.5px;top:584px;font-size:16px;line-height:16px;color:#ffffff;transform:scaleX(0.84);">4 CIRCUITOS DE MOTOR AUX.</span>
<span class="t" style="left:66px;top:607px;font-size:16px;line-height:16px;color:#ffffff;transform:scaleX(0.9);">95</span>
<span class="t" style="left:135.5px;top:607px;font-size:16px;line-height:16px;color:#ffffff;transform:scaleX(0.824);">4 MOTOR DE INTERFACE PLC</span>
<span class="t" style="left:66px;top:630px;font-size:16px;line-height:16px;color:#ffffff;transform:scaleX(0.9);">96</span>
<span class="t" style="left:135.5px;top:630px;font-size:16px;line-height:16px;color:#ffffff;transform:scaleX(0.872);">ALIMENTAÇÃO BÁSICA AS1</span>
<span class="t" style="left:66px;top:653px;font-size:16px;line-height:16px;color:#ffffff;transform:scaleX(0.9);">97</span>
<span class="t" style="left:135.5px;top:653px;font-size:16px;line-height:16px;color:#ffffff;transform:scaleX(0.864);">ALIMENTAÇÃO BÁSICA SB1</span>
<span class="t" style="left:66px;top:676px;font-size:16px;line-height:16px;color:#ffffff;transform:scaleX(0.9);">98</span>
<span class="t" style="left:135.5px;top:676px;font-size:16px;line-height:16px;color:#ffffff;transform:scaleX(0.814);">LAYOUT</span>
<span class="t" style="left:66px;top:699px;font-size:16px;line-height:16px;color:#ffffff;transform:scaleX(0.9);">99</span>
<span class="t" style="left:135.5px;top:699px;font-size:16px;line-height:16px;color:#ffffff;transform:scaleX(0.903);">SLOT de alimentação-1</span>
<span class="t" style="left:66px;top:722px;font-size:16px;line-height:16px;color:#ffffff;transform:scaleX(0.899);">100</span>
<span class="t" style="left:135.5px;top:722px;font-size:16px;line-height:16px;color:#ffffff;transform:scaleX(0.812);">PROFIBUS REDE-2 SLOT</span>
<span class="t" style="left:66px;top:745px;font-size:16px;line-height:16px;color:#ffffff;transform:scaleX(0.899);">101</span>
<span class="t" style="left:135.5px;top:745px;font-size:16px;line-height:16px;color:#ffffff;transform:scaleX(0.836);">CARTÕES DE ENTRADAS DIG.</span>
<span class="t" style="left:66px;top:768px;font-size:16px;line-height:16px;color:#ffffff;transform:scaleX(0.899);">102</span>
<span class="t" style="left:135.5px;top:768px;font-size:16px;line-height:16px;color:#ffffff;transform:scaleX(0.848);">SAÍDAS DIGITAIS-SLOT</span>
<span class="t" style="left:66px;top:791px;font-size:16px;line-height:16px;color:#ffffff;transform:scaleX(0.899);">103</span>
<span class="t" style="left:135.5px;top:791px;font-size:16px;line-height:16px;color:#ffffff;transform:scaleX(0.86);">ENTRADAS DIGITAIS</span>
<span class="t" style="left:66px;top:814px;font-size:16px;line-height:16px;color:#ffffff;transform:scaleX(0.899);">104</span>
<span class="t" style="left:135.5px;top:814px;font-size:16px;line-height:16px;color:#ffffff;transform:scaleX(0.86);">ENTRADAS DIGITAIS</span>
<span class="t" style="left:66px;top:837px;font-size:16px;line-height:16px;color:#ffffff;transform:scaleX(0.899);">105</span>
<span class="t" style="left:135.5px;top:837px;font-size:16px;line-height:16px;color:#ffffff;transform:scaleX(0.861);">SAÍDAS DIGITAIS</span>
<div style="left:6px;top:855px;width:366.5px;height:23px;background:#a6caf0;border:1px dotted #1b2a3c;"></div>
<span class="t" style="left:66px;top:860px;font-size:16px;line-height:16px;color:#000;transform:scaleX(0.899);">106</span>
<span class="t" style="left:135.5px;top:860px;font-size:16px;line-height:16px;color:#000;transform:scaleX(0.908);">Régua de bornes</span>
<span class="t" style="left:66px;top:883px;font-size:16px;line-height:16px;color:#ffffff;transform:scaleX(0.899);">107</span>
<span class="t" style="left:135.5px;top:883px;font-size:16px;line-height:16px;color:#ffffff;transform:scaleX(0.908);">Régua de bornes</span>
<span class="t" style="left:66px;top:906px;font-size:16px;line-height:16px;color:#ffffff;transform:scaleX(0.899);">108</span>
<span class="t" style="left:135.5px;top:906px;font-size:16px;line-height:16px;color:#ffffff;transform:scaleX(0.898);">Conectores</span>
<span class="t" style="left:66px;top:929px;font-size:16px;line-height:16px;color:#ffffff;transform:scaleX(0.899);">109</span>
<span class="t" style="left:135.5px;top:929px;font-size:16px;line-height:16px;color:#ffffff;transform:scaleX(0.898);">Conectores</span>
<span class="t" style="left:66px;top:952px;font-size:16px;line-height:16px;color:#ffffff;transform:scaleX(0.941);">110</span>
<span class="t" style="left:135.5px;top:952px;font-size:16px;line-height:16px;color:#ffffff;transform:scaleX(0.948);">Diagrama de detalhe do cabo</span>
<div style="left:6px;top:346px;width:368px;height:629px;overflow:hidden;pointer-events:none;"><svg style="left:-6px;top:0" width="374" height="640"><defs><linearGradient id="gri" x1="0" y1="0" x2="1" y2="1"><stop offset="0" stop-color="#ffffff"/><stop offset="1" stop-color="#a9c8e2"/></linearGradient><g id="ri"><rect x=".5" y=".5" width="16" height="14" fill="url(#gri)" stroke="#5b8fc7"/><rect x="1" y="10" width="15" height="4" fill="#4f86c4"/><rect x="2.500" y="11" width="3" height="2" fill="#eef4fb"/><rect x="7" y="11" width="3" height="2" fill="#eef4fb"/><rect x="11.500" y="11" width="3" height="2" fill="#eef4fb"/></g></defs><use href="#ri" x="41.500" y="30"/><use href="#ri" x="41.500" y="53"/><use href="#ri" x="41.500" y="76"/><use href="#ri" x="41.500" y="99"/><use href="#ri" x="41.500" y="122"/><use href="#ri" x="41.500" y="145"/><use href="#ri" x="41.500" y="168"/><use href="#ri" x="41.500" y="191"/><use href="#ri" x="41.500" y="214"/><use href="#ri" x="41.500" y="237"/><use href="#ri" x="41.500" y="260"/><use href="#ri" x="41.500" y="283"/><use href="#ri" x="41.500" y="306"/><use href="#ri" x="41.500" y="329"/><use href="#ri" x="41.500" y="352"/><use href="#ri" x="41.500" y="375"/><use href="#ri" x="41.500" y="398"/><use href="#ri" x="41.500" y="421"/><use href="#ri" x="41.500" y="444"/><use href="#ri" x="41.500" y="467"/><use href="#ri" x="41.500" y="490"/><use href="#ri" x="41.500" y="513"/><use href="#ri" x="41.500" y="536"/><use href="#ri" x="41.500" y="559"/><use href="#ri" x="41.500" y="582"/><use href="#ri" x="41.500" y="605"/><use href="#ri" x="41.500" y="628"/></svg></div>
<div style="left:406px;top:253px;width:1514px;height:737px;background:#212830;"></div>
<svg style="left:0px;top:0px;pointer-events:none;" width="1920" height="1028" viewBox="0 0 1920 1028"><path d="M468.0 253V990" stroke="#272e39" stroke-width="1"/><path d="M538.9 253V990" stroke="#272e39" stroke-width="1"/><path d="M609.8 253V990" stroke="#272e39" stroke-width="1"/><path d="M680.7 253V990" stroke="#2d3541" stroke-width="1"/><path d="M751.6 253V990" stroke="#272e39" stroke-width="1"/><path d="M822.5 253V990" stroke="#272e39" stroke-width="1"/><path d="M893.4 253V990" stroke="#272e39" stroke-width="1"/><path d="M964.3 253V990" stroke="#272e39" stroke-width="1"/><path d="M1035.2 253V990" stroke="#2d3541" stroke-width="1"/><path d="M1106.1 253V990" stroke="#272e39" stroke-width="1"/><path d="M406 279.5H1060" stroke="#272e39" stroke-width="1"/><path d="M406 350.5H1060" stroke="#2d3541" stroke-width="1"/><path d="M406 421.5H1060" stroke="#272e39" stroke-width="1"/><path d="M406 492.5H1060" stroke="#272e39" stroke-width="1"/><path d="M406 563.5H1060" stroke="#272e39" stroke-width="1"/><path d="M406 634.5H1060" stroke="#272e39" stroke-width="1"/><path d="M406 705.5H1060" stroke="#2d3541" stroke-width="1"/><path d="M406 776.5H1060" stroke="#272e39" stroke-width="1"/><path d="M406 847.5H1060" stroke="#272e39" stroke-width="1"/><g stroke="#19e619" stroke-width="1.150" fill="none"><rect x="716.2" y="385.3" width="177.4" height="425.9"/><path d="M716.2 420.8H893.6"/><path d="M716.2 456.3H893.6"/><path d="M716.2 491.8H893.6"/><path d="M716.2 527.3H893.6"/><path d="M716.2 562.8H893.6"/><path d="M716.2 598.2H893.6"/><path d="M716.2 633.7H893.6"/><path d="M716.2 669.2H893.6"/><path d="M716.2 704.7H893.6"/><path d="M716.2 740.2H893.6"/><path d="M716.2 775.7H893.6"/><path d="M542 403.4H716.2M893.6 403.4H1060"/><circle cx="730.3" cy="403.4" r="10.300"/><path d="M722.7 410.4L732.1 393.3M728.5 413.5L737.9 396.4"/><circle cx="879.4" cy="403.4" r="10.300"/><path d="M887.0 410.4L877.6 393.3M881.2 413.5L871.8 396.4"/><path d="M542 438.9H716.2M893.6 438.9H1060"/><circle cx="730.3" cy="438.9" r="10.300"/><path d="M722.7 445.9L732.1 428.8M728.5 449.0L737.9 431.9"/><circle cx="879.4" cy="438.9" r="10.300"/><path d="M887.0 445.9L877.6 428.8M881.2 449.0L871.8 431.9"/><path d="M542 474.4H716.2M893.6 474.4H1060"/><circle cx="730.3" cy="474.4" r="10.300"/><path d="M722.7 481.4L732.1 464.3M728.5 484.5L737.9 467.4"/><circle cx="879.4" cy="474.4" r="10.300"/><path d="M887.0 481.4L877.6 464.3M881.2 484.5L871.8 467.4"/><path d="M542 509.9H716.2M893.6 509.9H1060"/><circle cx="730.3" cy="509.9" r="10.300"/><path d="M722.7 516.9L732.1 499.8M728.5 520.0L737.9 502.9"/><circle cx="879.4" cy="509.9" r="10.300"/><path d="M887.0 516.9L877.6 499.8M881.2 520.0L871.8 502.9"/><path d="M542 545.4H716.2M893.6 545.4H1060"/><circle cx="730.3" cy="545.4" r="10.300"/><path d="M722.7 552.4L732.1 535.3M728.5 555.5L737.9 538.4"/><circle cx="879.4" cy="545.4" r="10.300"/><path d="M887.0 552.4L877.6 535.3M881.2 555.5L871.8 538.4"/><path d="M542 580.9H716.2M893.6 580.9H1060"/><circle cx="730.3" cy="580.9" r="10.300"/><path d="M722.7 587.9L732.1 570.8M728.5 591.0L737.9 573.9"/><circle cx="879.4" cy="580.9" r="10.300"/><path d="M887.0 587.9L877.6 570.8M881.2 591.0L871.8 573.9"/><path d="M542 616.4H716.2M893.6 616.4H1060"/><circle cx="730.3" cy="616.4" r="10.300"/><path d="M722.7 623.4L732.1 606.3M728.5 626.5L737.9 609.4"/><circle cx="879.4" cy="616.4" r="10.300"/><path d="M887.0 623.4L877.6 606.3M881.2 626.5L871.8 609.4"/><path d="M542 651.9H716.2M893.6 651.9H1060"/><circle cx="730.3" cy="651.9" r="10.300"/><path d="M722.7 658.9L732.1 641.8M728.5 662.0L737.9 644.9"/><circle cx="879.4" cy="651.9" r="10.300"/><path d="M887.0 658.9L877.6 641.8M881.2 662.0L871.8 644.9"/><path d="M542 687.4H716.2M893.6 687.4H1060"/><circle cx="730.3" cy="687.4" r="10.300"/><path d="M722.7 694.4L732.1 677.3M728.5 697.5L737.9 680.4"/><circle cx="879.4" cy="687.4" r="10.300"/><path d="M887.0 694.4L877.6 677.3M881.2 697.5L871.8 680.4"/><path d="M542 722.9H716.2M893.6 722.9H1060"/><circle cx="730.3" cy="722.9" r="10.300"/><path d="M722.7 729.9L732.1 712.8M728.5 733.0L737.9 715.9"/><circle cx="879.4" cy="722.9" r="10.300"/><path d="M887.0 729.9L877.6 712.8M881.2 733.0L871.8 715.9"/><path d="M542 758.3H716.2M893.6 758.3H1060"/><circle cx="730.3" cy="758.3" r="10.300"/><path d="M722.7 765.3L732.1 748.2M728.5 768.4L737.9 751.3"/><circle cx="879.4" cy="758.3" r="10.300"/><path d="M887.0 765.3L877.6 748.2M881.2 768.4L871.8 751.3"/><path d="M542 793.8H716.2M893.6 793.8H1060"/><circle cx="730.3" cy="793.8" r="10.300"/><path d="M722.7 800.8L732.1 783.7M728.5 803.9L737.9 786.8"/><circle cx="879.4" cy="793.8" r="10.300"/><path d="M887.0 800.8L877.6 783.7M881.2 803.9L871.8 786.8"/></g><g stroke="#d65fd6" stroke-width="1.200" fill="none"><circle cx="804.800" cy="385.300" r="7.300"/><path d="M804.800 371V397"/></g><path d="M790 385.300h30" stroke="#5a6a5a" stroke-width=".6"/><text class="cad" x="782.6" y="297.3" font-size="25" fill="#1fd8d8" stroke="#1fd8d8" stroke-width=".45" textLength="45.8" lengthAdjust="spacingAndGlyphs" text-anchor="start">+A6</text><text class="cad" x="767.4" y="324.2" font-size="25" fill="#1fd8d8" stroke="#1fd8d8" stroke-width=".45" textLength="74.0" lengthAdjust="spacingAndGlyphs" text-anchor="start">XA6−4</text><text class="cad" x="730.0" y="350.5" font-size="25" fill="#1fd8d8" stroke="#1fd8d8" stroke-width=".45" textLength="149.3" lengthAdjust="spacingAndGlyphs" text-anchor="start">MOTOBOMBAS</text><text class="cad" x="474.5" y="413.1" font-size="26" fill="#1fd8d8" stroke="#1fd8d8" stroke-width=".45" textLength="53.0" lengthAdjust="spacingAndGlyphs" text-anchor="start">M1: U</text><text class="cad" x="578.3" y="396.9" font-size="21" fill="#e4e41c" stroke="#e4e41c" stroke-width=".45" textLength="37.0" lengthAdjust="spacingAndGlyphs" text-anchor="start">19.2</text><text class="cad" x="994.2" y="396.9" font-size="21" fill="#e4e41c" stroke="#e4e41c" stroke-width=".45" textLength="37.0" lengthAdjust="spacingAndGlyphs" text-anchor="start">19.2</text><text class="cad" x="799.9" y="410.6" font-size="20" fill="#e4e41c" stroke="#e4e41c" stroke-width=".45" textLength="9.7" lengthAdjust="spacingAndGlyphs" text-anchor="start">1</text><text class="cad" x="472.6" y="448.6" font-size="26" fill="#1fd8d8" stroke="#1fd8d8" stroke-width=".45" textLength="54.9" lengthAdjust="spacingAndGlyphs" text-anchor="start">M1: V</text><text class="cad" x="576.8" y="432.4" font-size="21" fill="#e4e41c" stroke="#e4e41c" stroke-width=".45" textLength="38.3" lengthAdjust="spacingAndGlyphs" text-anchor="start">19.4</text><text class="cad" x="994.2" y="432.4" font-size="21" fill="#e4e41c" stroke="#e4e41c" stroke-width=".45" textLength="38.3" lengthAdjust="spacingAndGlyphs" text-anchor="start">19.4</text><text class="cad" x="797.9" y="446.1" font-size="20" fill="#e4e41c" stroke="#e4e41c" stroke-width=".45" textLength="13.7" lengthAdjust="spacingAndGlyphs" text-anchor="start">2</text><text class="cad" x="470.2" y="484.1" font-size="26" fill="#1fd8d8" stroke="#1fd8d8" stroke-width=".45" textLength="57.3" lengthAdjust="spacingAndGlyphs" text-anchor="start">M1: W</text><text class="cad" x="577.8" y="467.9" font-size="21" fill="#e4e41c" stroke="#e4e41c" stroke-width=".45" textLength="37.8" lengthAdjust="spacingAndGlyphs" text-anchor="start">19.6</text><text class="cad" x="994.2" y="467.9" font-size="21" fill="#e4e41c" stroke="#e4e41c" stroke-width=".45" textLength="37.8" lengthAdjust="spacingAndGlyphs" text-anchor="start">19.6</text><text class="cad" x="797.9" y="481.6" font-size="20" fill="#e4e41c" stroke="#e4e41c" stroke-width=".45" textLength="13.7" lengthAdjust="spacingAndGlyphs" text-anchor="start">3</text><text class="cad" x="460.6" y="519.6" font-size="26" fill="#1fd8d8" stroke="#1fd8d8" stroke-width=".45" textLength="66.9" lengthAdjust="spacingAndGlyphs" text-anchor="start">M1: PE</text><text class="cad" x="577.3" y="503.4" font-size="21" fill="#e4e41c" stroke="#e4e41c" stroke-width=".45" textLength="37.8" lengthAdjust="spacingAndGlyphs" text-anchor="start">19.7</text><text class="cad" x="994.2" y="503.4" font-size="21" fill="#e4e41c" stroke="#e4e41c" stroke-width=".45" textLength="37.8" lengthAdjust="spacingAndGlyphs" text-anchor="start">19.7</text><text class="cad" x="797.9" y="517.1" font-size="20" fill="#e4e41c" stroke="#e4e41c" stroke-width=".45" textLength="13.7" lengthAdjust="spacingAndGlyphs" text-anchor="start">4</text><text class="cad" x="471.3" y="555.1" font-size="26" fill="#1fd8d8" stroke="#1fd8d8" stroke-width=".45" textLength="56.2" lengthAdjust="spacingAndGlyphs" text-anchor="start">M2: U</text><text class="cad" x="577.8" y="538.9" font-size="21" fill="#e4e41c" stroke="#e4e41c" stroke-width=".45" textLength="37.8" lengthAdjust="spacingAndGlyphs" text-anchor="start">19.9</text><text class="cad" x="994.2" y="538.9" font-size="21" fill="#e4e41c" stroke="#e4e41c" stroke-width=".45" textLength="37.8" lengthAdjust="spacingAndGlyphs" text-anchor="start">19.9</text><text class="cad" x="797.9" y="552.6" font-size="20" fill="#e4e41c" stroke="#e4e41c" stroke-width=".45" textLength="13.7" lengthAdjust="spacingAndGlyphs" text-anchor="start">5</text><text class="cad" x="470.2" y="590.6" font-size="26" fill="#1fd8d8" stroke="#1fd8d8" stroke-width=".45" textLength="57.3" lengthAdjust="spacingAndGlyphs" text-anchor="start">M2: V</text><text class="cad" x="573.8" y="574.4" font-size="21" fill="#e4e41c" stroke="#e4e41c" stroke-width=".45" textLength="43.3" lengthAdjust="spacingAndGlyphs" text-anchor="start">19.11</text><text class="cad" x="993.8" y="574.4" font-size="21" fill="#e4e41c" stroke="#e4e41c" stroke-width=".45" textLength="43.3" lengthAdjust="spacingAndGlyphs" text-anchor="start">19.11</text><text class="cad" x="797.9" y="588.1" font-size="20" fill="#e4e41c" stroke="#e4e41c" stroke-width=".45" textLength="13.7" lengthAdjust="spacingAndGlyphs" text-anchor="start">6</text><text class="cad" x="467.5" y="626.1" font-size="26" fill="#1fd8d8" stroke="#1fd8d8" stroke-width=".45" textLength="60.0" lengthAdjust="spacingAndGlyphs" text-anchor="start">M2: W</text><text class="cad" x="568.8" y="609.9" font-size="21" fill="#e4e41c" stroke="#e4e41c" stroke-width=".45" textLength="47.3" lengthAdjust="spacingAndGlyphs" text-anchor="start">19.13</text><text class="cad" x="993.8" y="609.9" font-size="21" fill="#e4e41c" stroke="#e4e41c" stroke-width=".45" textLength="47.3" lengthAdjust="spacingAndGlyphs" text-anchor="start">19.13</text><text class="cad" x="797.9" y="623.6" font-size="20" fill="#e4e41c" stroke="#e4e41c" stroke-width=".45" textLength="13.7" lengthAdjust="spacingAndGlyphs" text-anchor="start">7</text><text class="cad" x="457.6" y="661.6" font-size="26" fill="#1fd8d8" stroke="#1fd8d8" stroke-width=".45" textLength="69.9" lengthAdjust="spacingAndGlyphs" text-anchor="start">M2: PE</text><text class="cad" x="568.8" y="645.4" font-size="21" fill="#e4e41c" stroke="#e4e41c" stroke-width=".45" textLength="46.3" lengthAdjust="spacingAndGlyphs" text-anchor="start">19.14</text><text class="cad" x="993.8" y="645.4" font-size="21" fill="#e4e41c" stroke="#e4e41c" stroke-width=".45" textLength="46.3" lengthAdjust="spacingAndGlyphs" text-anchor="start">19.14</text><text class="cad" x="797.9" y="659.1" font-size="20" fill="#e4e41c" stroke="#e4e41c" stroke-width=".45" textLength="13.7" lengthAdjust="spacingAndGlyphs" text-anchor="start">8</text><text class="cad" x="471.6" y="697.1" font-size="26" fill="#1fd8d8" stroke="#1fd8d8" stroke-width=".45" textLength="55.9" lengthAdjust="spacingAndGlyphs" text-anchor="start">M3: U</text><text class="cad" x="569.3" y="680.9" font-size="21" fill="#e4e41c" stroke="#e4e41c" stroke-width=".45" textLength="46.3" lengthAdjust="spacingAndGlyphs" text-anchor="start">19.16</text><text class="cad" x="993.8" y="680.9" font-size="21" fill="#e4e41c" stroke="#e4e41c" stroke-width=".45" textLength="46.3" lengthAdjust="spacingAndGlyphs" text-anchor="start">19.16</text><text class="cad" x="797.9" y="694.6" font-size="20" fill="#e4e41c" stroke="#e4e41c" stroke-width=".45" textLength="13.7" lengthAdjust="spacingAndGlyphs" text-anchor="start">9</text><text class="cad" x="470.6" y="732.6" font-size="26" fill="#1fd8d8" stroke="#1fd8d8" stroke-width=".45" textLength="56.9" lengthAdjust="spacingAndGlyphs" text-anchor="start">M3: V</text><text class="cad" x="568.8" y="716.4" font-size="21" fill="#e4e41c" stroke="#e4e41c" stroke-width=".45" textLength="46.8" lengthAdjust="spacingAndGlyphs" text-anchor="start">19.18</text><text class="cad" x="993.8" y="716.4" font-size="21" fill="#e4e41c" stroke="#e4e41c" stroke-width=".45" textLength="46.8" lengthAdjust="spacingAndGlyphs" text-anchor="start">19.18</text><text class="cad" x="794.2" y="730.1" font-size="20" fill="#e4e41c" stroke="#e4e41c" stroke-width=".45" textLength="21.2" lengthAdjust="spacingAndGlyphs" text-anchor="start">10</text><text class="cad" x="467.5" y="768.0" font-size="26" fill="#1fd8d8" stroke="#1fd8d8" stroke-width=".45" textLength="60.0" lengthAdjust="spacingAndGlyphs" text-anchor="start">M3: W</text><text class="cad" x="566.8" y="751.8" font-size="21" fill="#e4e41c" stroke="#e4e41c" stroke-width=".45" textLength="48.8" lengthAdjust="spacingAndGlyphs" text-anchor="start">19.20</text><text class="cad" x="993.8" y="751.8" font-size="21" fill="#e4e41c" stroke="#e4e41c" stroke-width=".45" textLength="48.8" lengthAdjust="spacingAndGlyphs" text-anchor="start">19.20</text><text class="cad" x="796.2" y="765.5" font-size="20" fill="#e4e41c" stroke="#e4e41c" stroke-width=".45" textLength="17.2" lengthAdjust="spacingAndGlyphs" text-anchor="start">11</text><text class="cad" x="457.6" y="803.5" font-size="26" fill="#1fd8d8" stroke="#1fd8d8" stroke-width=".45" textLength="69.9" lengthAdjust="spacingAndGlyphs" text-anchor="start">M3: PE</text><text class="cad" x="571.8" y="787.3" font-size="21" fill="#e4e41c" stroke="#e4e41c" stroke-width=".45" textLength="44.3" lengthAdjust="spacingAndGlyphs" text-anchor="start">19.21</text><text class="cad" x="993.8" y="787.3" font-size="21" fill="#e4e41c" stroke="#e4e41c" stroke-width=".45" textLength="44.3" lengthAdjust="spacingAndGlyphs" text-anchor="start">19.21</text><text class="cad" x="794.2" y="801.0" font-size="20" fill="#e4e41c" stroke="#e4e41c" stroke-width=".45" textLength="21.2" lengthAdjust="spacingAndGlyphs" text-anchor="start">12</text></svg>
<span class="t" style="left:409.5px;top:261px;font-size:16px;line-height:16px;color:#d8dadd;transform:scaleX(0.969);">[−][Top][2D Wireframe]</span>
<div style="left:401px;top:889px;width:659px;height:104px;background:#3b4453;"></div>
<div style="left:0px;top:984px;width:1920px;height:9px;background:#3b4453;"></div>
<div style="left:400.5px;top:855.5px;width:72px;height:33.8px;background:#2a313e;border-radius:4px 0 0 4px;"></div>
<div style="left:472px;top:856px;width:588px;height:33px;background:#bcbdc0;border-radius:4px 0 0 4px;"></div>
<svg style="left:0px;top:0px;" width="1060" height="900" viewBox="0 0 1060 900"><rect x="405" y="861.0" width="2" height="2" fill="#cfd2d6"/><rect x="409" y="861.0" width="2" height="2" fill="#cfd2d6"/><rect x="405" y="864.9" width="2" height="2" fill="#cfd2d6"/><rect x="409" y="864.9" width="2" height="2" fill="#cfd2d6"/><rect x="405" y="868.8" width="2" height="2" fill="#cfd2d6"/><rect x="409" y="868.8" width="2" height="2" fill="#cfd2d6"/><rect x="405" y="872.7" width="2" height="2" fill="#cfd2d6"/><rect x="409" y="872.7" width="2" height="2" fill="#cfd2d6"/><rect x="405" y="876.6" width="2" height="2" fill="#cfd2d6"/><rect x="409" y="876.6" width="2" height="2" fill="#cfd2d6"/><rect x="405" y="880.5" width="2" height="2" fill="#cfd2d6"/><rect x="409" y="880.5" width="2" height="2" fill="#cfd2d6"/><path d="M420 865l10.500 10.500M430.500 865l-10.500 10.500" stroke="#c2c2c2" stroke-width="2.300"/><path d="M448.800 878.200l9.500-9.500" stroke="#a8a8a8" stroke-width="3.400" stroke-linecap="round"/><circle cx="461" cy="866" r="4.600" fill="#a8a8a8"/><path d="M461.500 866.500l1.200-7 5.500 5.500z" fill="#2a313e"/><path d="M460.200 865.200l2.500-5.500 1.800 1.800z" fill="#2a313e"/><rect x="477.500" y="864.500" width="19" height="14" fill="#a9aaad" stroke="#6d6e71"/><rect x="478" y="865" width="18" height="3" fill="#77787b"/><path d="M480 871l3 2-3 2M484.500 875.500h3" stroke="#6d6e71" fill="none"/><path d="M500 870h9l-4.500 5z" fill="#5f6063"/></svg>
<span class="t" style="left:510px;top:867.5px;font-family:'Liberation Mono',monospace;font-size:14.670px;line-height:15px;color:#2b2b2b;">_cont</span>
<div style="left:406px;top:895px;width:20px;height:92px;background:#2a313e;border-radius:5px;"></div>
<div style="left:431px;top:899px;width:629px;height:85px;background:#ffffff;"></div>
<div style="left:504px;top:901px;width:556px;height:21px;background:#f0f0f0;border-top:1px solid #dcdcdc;border-bottom:1px solid #dcdcdc;"></div>
<div style="left:504px;top:901px;width:1px;height:21px;background:#d4d4d4;"></div>
<div style="left:572px;top:901px;width:1px;height:21px;background:#d4d4d4;"></div>
<div style="left:653px;top:901px;width:1px;height:21px;background:#d4d4d4;"></div>
<div style="left:742px;top:901px;width:1px;height:21px;background:#d4d4d4;"></div>
<div style="left:824px;top:901px;width:1px;height:21px;background:#d4d4d4;"></div>
<div style="left:919px;top:901px;width:1px;height:21px;background:#d4d4d4;"></div>
<div style="left:988px;top:901px;width:1px;height:21px;background:#d4d4d4;"></div>
<div style="left:435px;top:925px;width:580px;height:28px;background:#f0f0f0;"></div>
<svg style="left:0px;top:0px;" width="1060" height="990" viewBox="0 0 1060 990"><defs><linearGradient id="gsh2" x1="0" y1="0" x2="1" y2="1"><stop offset="0" stop-color="#ffffff"/><stop offset="1" stop-color="#a5c3de"/></linearGradient></defs><rect x="411.0" y="902.0" width="1.200" height="1.200" fill="#c9ccd2"/><rect x="413.4" y="902.0" width="1.200" height="1.200" fill="#c9ccd2"/><rect x="411.0" y="904.4" width="1.200" height="1.200" fill="#c9ccd2"/><rect x="413.4" y="904.4" width="1.200" height="1.200" fill="#c9ccd2"/><rect x="411.0" y="906.8" width="1.200" height="1.200" fill="#c9ccd2"/><rect x="413.4" y="906.8" width="1.200" height="1.200" fill="#c9ccd2"/><rect x="411.0" y="909.2" width="1.200" height="1.200" fill="#c9ccd2"/><rect x="413.4" y="909.2" width="1.200" height="1.200" fill="#c9ccd2"/><rect x="411.0" y="911.6" width="1.200" height="1.200" fill="#c9ccd2"/><rect x="413.4" y="911.6" width="1.200" height="1.200" fill="#c9ccd2"/><rect x="440.500" y="900.500" width="13" height="10" fill="#fff" stroke="#1e1e1e"/><rect x="444.500" y="903.500" width="13" height="10" fill="#fff" stroke="#1e1e1e"/><path d="M445 912h12" stroke="#777" stroke-width="2"/><path d="M512 905.500h13M512 909.500h13" stroke="#1e1e1e"/><rect x="523.500" y="903.500" width="4" height="3" fill="#fff" stroke="#1e1e1e"/><rect x="523.500" y="908" width="4" height="3" fill="#fff" stroke="#1e1e1e"/><path d="M589.500 903v15" stroke="#1e1e1e"/><circle cx="589.500" cy="910.500" r="4" fill="#fff" stroke="#1e1e1e"/><path d="M587 908l5 5M592 908l-5 5" stroke="#888" stroke-width=".800"/><rect x="665.500" y="902.500" width="8" height="4" fill="#fff" stroke="#1e1e1e"/><path d="M669.500 907v13M661 911.500h17M664.500 914v6M674.500 914v6" stroke="#1e1e1e" stroke-dasharray="3 1"/><rect x="754.500" y="903.500" width="9" height="9" rx="2.500" fill="#fff" stroke="#1e1e1e" stroke-width="1.600"/><path d="M755 906.500h8" stroke="#1e1e1e" stroke-width="1.600"/><path d="M834 916v-13h13M838 916v-9h9" stroke="#1e1e1e" stroke-width="1.500" fill="none"/><path d="M836 905h10" stroke="#999" stroke-width="2" stroke-dasharray="1 1"/><path d="M932 916.500l1-5 5-9 3 1.500-5 9z" fill="#eee" stroke="#1e1e1e"/><path d="M935 906l4 2" stroke="#1e1e1e"/><path d="M997 903v9M1000 903v9M1003 903v9M1006 903v9M1009.500 903v9" stroke="#1e1e1e" stroke-width="1.500"/><rect x="443.5" y="934.5" width="15" height="13" rx="2" fill="#32c832" stroke="#128a12"/><path d="M439.5 932a2 2 0 0 1 2-2h5l2 2h6v12h-15z" fill="#8be88b" stroke="#19a519"/><path d="M472.5 934.5h11l4 4v9h-15z" fill="url(#gsh2)" stroke="#4a7fc0"/><path d="M473 945h14" stroke="#4a7fc0" stroke-width="3"/><path d="M475 945h3M480 945h3M485 945h3" stroke="#e8f1fa" stroke-width="1.300"/><path d="M474 930l1.500 3.500 3.500-2-1 3.500 3.500 1-3.500 1.500 1.500 3.500-3.500-1.500-2 3-1-3.500-3.500 1 2-3-3-2 3.500-1-1-3.500 3 1.500z" fill="#f4e61a" stroke="#c9b600" stroke-width=".500"/><path d="M497.5 930.5h12l4 4v9h-16z" fill="url(#gsh2)" stroke="#4a7fc0"/><path d="M498 941h15" stroke="#4a7fc0" stroke-width="3"/><path d="M500 941h3M505 941h3M510 941h3" stroke="#e8f1fa" stroke-width="1.300"/><rect x="501.5" y="933.5" width="15" height="15" fill="#9fc0e4" stroke="#2d5da0"/><rect x="504" y="935" width="10" height="5" fill="#f4f8fc"/><rect x="505" y="943" width="8" height="5" fill="#2d5da0"/><rect x="507" y="944" width="2" height="4" fill="#fff"/><path d="M526.5 932.5h15l4 4v11h-19z" fill="url(#gsh2)" stroke="#4a7fc0"/><path d="M527 945h18" stroke="#4a7fc0" stroke-width="3"/><path d="M529 945h3M534 945h3M539 945h3" stroke="#e8f1fa" stroke-width="1.300"/><path d="M555.5 930.5h10l4 4v8h-14z" fill="#e3eef9" stroke="#4a86c8"/><path d="M558.5 933.5h10l4 4v8h-14z" fill="#e3eef9" stroke="#4a86c8"/><rect x="564.5" y="938.5" width="10" height="10" fill="#eee" stroke="#777"/><path d="M566 942h7M566 944.5h7M566 947h7" stroke="#999"/><rect x="584.5" y="929.5" width="9" height="19" fill="#1f3f8f" stroke="#0c1f55"/><path d="M586 932h6M586 935h6M586 938h6M586 941h6M586 944h6" stroke="#9db6e6"/><rect x="594" y="931" width="10" height="17" fill="#1f86d6"/><path d="M599.5 933v14M596 938.5h7" stroke="#fff"/><path d="M614.5 930.5h13l4 4v13h-17z" fill="url(#gsh2)" stroke="#2f62a8"/><path d="M615 945h16" stroke="#2f62a8" stroke-width="3"/><path d="M617 945h3M622 945h3M627 945h3" stroke="#e8f1fa" stroke-width="1.300"/><rect x="618.5" y="929.5" width="9" height="15" rx="4.500" fill="none" stroke="#111" stroke-width="1.400"/><path d="M623 933v9" stroke="#111" stroke-width="1.400"/><path d="M649.5 930.5h10v17l-5-5-5 5z" fill="#dcecf9" stroke="#2f8fd0" stroke-width="1.200"/><path d="M642 930l9 9M651 930l-9 9M646.5 928v12M641 934.5h11" stroke="#e5c64a" stroke-width="1"/><path d="M676.5 930.5h10v17l-5-5-5 5z" fill="#dcecf9" stroke="#2f8fd0" stroke-width="1.200"/><path d="M701.5 935.5h14l4 4v8h-18z" fill="url(#gsh2)" stroke="#4a7fc0"/><path d="M702 945h17" stroke="#4a7fc0" stroke-width="3"/><path d="M704 945h3M709 945h3M714 945h3" stroke="#e8f1fa" stroke-width="1.300"/><path d="M700 935l8-6v4c8 0 12 4 12 12-2-5-6-7-12-7v4z" fill="#1f3d7a" stroke="#0f2450" stroke-width=".800"/><path d="M729.5 935.5h14l4 4v8h-18z" fill="url(#gsh2)" stroke="#4a7fc0"/><path d="M730 945h17" stroke="#4a7fc0" stroke-width="3"/><path d="M732 945h3M737 945h3M742 945h3" stroke="#e8f1fa" stroke-width="1.300"/><path d="M749 935l-8-6v4c-8 0-12 4-12 12 2-5 6-7 12-7v4z" fill="#1f3d7a" stroke="#0f2450" stroke-width=".800"/><path d="M758 937l9-6h11l-8 7z" fill="#efefef" stroke="#777"/><path d="M758 937v7l11 4v-7z" fill="#d6d6d6" stroke="#777"/><path d="M769 941l9-7v8l-9 6z" fill="#a8a8a8" stroke="#666"/><rect x="766.5" y="938.5" width="11" height="9" fill="url(#gsh2)" stroke="#3f77b8"/><circle cx="762.5" cy="936.5" r="1" fill="#d22"/><circle cx="765.5" cy="936" r="1" fill="#2a2"/><rect x="788.5" y="930.5" width="17" height="18" fill="#fafafa" stroke="#999"/><rect x="787" y="932" width="20" height="7" fill="#d81f26"/><path d="M790 934h3v3h-3zM795 934h4v3h-4zM801 934h3v2h-3z" fill="#fff"/><rect x="795.5" y="941.5" width="11" height="7" fill="url(#gsh2)" stroke="#3f77b8"/><path d="M816.5 931.5h15l4 4v10h-19z" fill="url(#gsh2)" stroke="#4a7fc0"/><path d="M817 943h18" stroke="#4a7fc0" stroke-width="3"/><path d="M819 943h3M824 943h3M829 943h3" stroke="#e8f1fa" stroke-width="1.300"/><path d="M820 934l7 7" stroke="#8a4b1f" stroke-width="2.500"/><circle cx="828.5" cy="944" r="3.500" fill="#e9eef5" stroke="#222"/><path d="M827.5 942.5l2.500 1.500-2.500 1.500z" fill="#222"/><rect x="845.5" y="930.5" width="8" height="6.500" fill="#e3eef9" stroke="#4a86c8" stroke-width="1.200"/><rect x="856.5" y="930.5" width="8" height="6.500" fill="#e3eef9" stroke="#4a86c8" stroke-width="1.200"/><rect x="845.5" y="940.5" width="8" height="6.500" fill="#e3eef9" stroke="#4a86c8" stroke-width="1.200"/><rect x="856.5" y="940.5" width="8" height="6.500" fill="#e3eef9" stroke="#4a86c8" stroke-width="1.200"/><rect x="874.5" y="938.5" width="12" height="9" fill="#dbe8f6" stroke="#3f77b8"/><path d="M880 930h9v3h-3v14h-3v-14h-3z" fill="#111"/><path d="M885 934v12" stroke="#c01818" stroke-width="1.500"/><path d="M891.5 930v17" stroke="#111" stroke-width="1.500"/><rect x="890" y="930" width="3" height="7" rx="1.500" fill="#18b818"/><path d="M894 943v6h-6z" fill="#000"/><rect x="904.5" y="932.5" width="17" height="14" rx="1" fill="url(#gsh2)" stroke="#4a86c8" stroke-width="1.300"/><path d="M906 947.5h17v-13" stroke="#888" fill="none"/><path d="M933.5 930l6 8" stroke="#2f62a8" stroke-width="3"/><path d="M937.5 938l6-4 8 8-10 7z" fill="#e2cf5a" stroke="#b09a2a" stroke-width=".800"/><path d="M938.5 939l5 8" stroke="#b09a2a" stroke-width=".700"/><path d="M962.5 933h11v3h-4v12h-3.500v-12h-3.500z" fill="#2f7fd0" stroke="#174f8c" stroke-width=".800"/><path d="M961.5 933l3 3" stroke="#174f8c" stroke-width="2"/><path d="M977.5 930v17" stroke="#111" stroke-width="1.500"/><rect x="976.0" y="930" width="3.500" height="6" fill="#5fa8ee"/><rect x="975.0" y="944" width="5.500" height="5" fill="#e0184a"/><rect x="966.0" y="944.5" width="5" height="4.500" fill="#4a9be8"/><rect x="990.0" y="929.5" width="19" height="19" rx="4" fill="#1f4f95" stroke="#0f3170"/><path d="M990.0 937v-3.500a4 4 0 0 1 4-4h11a4 4 0 0 1 4 4v2c-6 3-13 3-19 1.500z" fill="#3b74c0"/></svg>
<span class="t" style="left:994.5px;top:930.500px;font-size:19px;line-height:19px;font-weight:700;color:#fff;transform:scaleX(.85);">?</span>
<span class="t" style="left:465px;top:906px;font-size:11px;line-height:11px;color:#000;transform:scaleX(0.969);">Folhas</span>
<span class="t" style="left:535px;top:908px;font-size:11px;line-height:11px;color:#000;transform:scaleX(0.987);">Linhas</span>
<span class="t" style="left:605px;top:908px;font-size:11px;line-height:11px;color:#000;transform:scaleX(0.938);">Símbolos</span>
<span class="t" style="left:686px;top:908px;font-size:11px;line-height:11px;color:#000;transform:scaleX(0.959);">Diagramas</span>
<span class="t" style="left:775px;top:908px;font-size:11px;line-height:11px;color:#000;transform:scaleX(1.028);">Arquivos</span>
<span class="t" style="left:857px;top:908px;font-size:11px;line-height:11px;color:#000;">Topográfico</span>
<span class="t" style="left:952px;top:908px;font-size:11px;line-height:11px;color:#000;transform:scaleX(1.021);">Varias</span>
<div style="left:1018px;top:901px;width:42px;height:21px;overflow:hidden;"><span class="t" style="left:2.600px;top:7px;font-size:11px;line-height:11px;color:#000;transform:scaleX(.955);">Estimativas</span></div>
<div style="left:0px;top:993px;width:1920px;height:35px;background:#222933;"></div>
<svg style="left:0px;top:0px;" width="1920" height="1028" viewBox="0 0 1920 1028"><path d="M63 993h74l-12 30h-74z" fill="#3b4453"/><g fill="#dcdcdc"><rect x="20" y="1001.500" width="20" height="2.200"/><rect x="20" y="1008" width="20" height="2.200"/><rect x="20" y="1014.500" width="20" height="2.200"/></g><g stroke="#4b5464" stroke-width="1.200"><path d="M207.500 1018.500l9-20M290.500 1018.500l9-20M342.500 1018.500l9-20"/></g><path d="M313 1008.500h18M322 999.500v18" stroke="#f2f2f2" stroke-width="2.200"/><rect x="1144" y="995" width="59" height="30" fill="#3b4453"/><rect x="1206" y="995" width="80" height="30" fill="#3b4453"/><rect x="1289" y="995" width="211" height="30" fill="#3b4453"/><rect x="1503" y="995" width="132" height="30" fill="#3b4453"/><rect x="1638" y="995" width="50" height="30" fill="#3b4453"/><rect x="1689.5" y="995" width="29.5" height="30" fill="#3b4453"/><rect x="1722" y="995" width="90" height="30" fill="#3b4453"/><rect x="1815" y="995" width="38" height="30" fill="#3b4453"/><rect x="1856" y="995" width="30" height="30" fill="#3b4453"/><rect x="1888.5" y="995" width="29.5" height="30" fill="#3b4453"/><rect x="1207" y="996" width="28" height="28" fill="#5d8bc4"/><rect x="1237" y="996" width="28" height="28" fill="#5d8bc4"/><rect x="1290" y="996" width="28" height="28" fill="#5d8bc4"/><rect x="1421" y="996" width="28" height="28" fill="#5d8bc4"/><rect x="1504" y="996" width="28" height="28" fill="#5d8bc4"/><rect x="1753" y="996" width="28" height="28" fill="#5d8bc4"/><path d="M1211 1005.500h20M1211 1011.500h20M1211 1017.500h20M1215.500 1000v20M1221 1000v20M1226.500 1000v20" stroke="#f4f4f4" stroke-width="1.200"/><rect x="1243.0" y="1002.0" width="3" height="3" fill="#f4f4f4"/><rect x="1243.0" y="1008.5" width="3" height="3" fill="#f4f4f4"/><rect x="1243.0" y="1015.0" width="3" height="3" fill="#f4f4f4"/><rect x="1249.5" y="1002.0" width="3" height="3" fill="#f4f4f4"/><rect x="1249.5" y="1008.5" width="3" height="3" fill="#f4f4f4"/><rect x="1249.5" y="1015.0" width="3" height="3" fill="#f4f4f4"/><rect x="1256.0" y="1002.0" width="3" height="3" fill="#f4f4f4"/><rect x="1256.0" y="1008.5" width="3" height="3" fill="#f4f4f4"/><rect x="1256.0" y="1015.0" width="3" height="3" fill="#f4f4f4"/><path d="M1271 1007h10l-5 5.500z" fill="#c9ccd1"/><path d="M1294.500 1000v19h19" stroke="#f4f4f4" stroke-width="1.300" fill="none"/><rect x="1294.500" y="1013.500" width="5" height="5" fill="none" stroke="#f4f4f4"/><circle cx="1332" cy="1010" r="7.500" fill="none" stroke="#c9ccd1" stroke-width="1.300"/><path d="M1332 1010h12M1332 1010l6.500-8.500" stroke="#c9ccd1" stroke-width="1.200"/><path d="M1354 1007h10l-5 5.500z" fill="#c9ccd1"/><path d="M1384.500 1000v18" stroke="#3ec46a" stroke-width="1.200"/><path d="M1376 1002l15 15" stroke="#d64545" stroke-width="1.200"/><rect x="1382.500" y="1007.500" width="3.500" height="3.500" fill="#444" stroke="#ddd" stroke-width=".800"/><path d="M1404 1007h10l-5 5.500z" fill="#c9ccd1"/><path d="M1426 1017.500h19M1427 1016l14-13" stroke="#f4f4f4" stroke-width="1.400"/><rect x="1431.500" y="1008.500" width="3" height="3" fill="#f4f4f4"/><rect x="1457.500" y="1003.500" width="17" height="15" fill="none" stroke="#c9ccd1" stroke-width="1.200"/><rect x="1455.500" y="1000.500" width="5" height="5" fill="#3b4453" stroke="#e8a46a" stroke-width="1.200"/><path d="M1485 1007h10l-5 5.500z" fill="#c9ccd1"/><path d="M1509 1019l6.500-9 2-9 2 9 6.500 9-8.500-5z" fill="#f4f4f4"/><circle cx="1524.500" cy="1004.500" r="3.300" fill="none" stroke="#f4f4f4" stroke-width="1.200"/><path d="M1538 1019l6.500-9 2-9 2 9 6.500 9-8.500-5z" fill="#c9ccd1"/><path d="M1556 1001l-3 4h2l-2 4 4-5h-2z" fill="#c9ccd1"/><path d="M1568 1019l6.500-9 2-9 2 9 6.500 9-8.500-5z" fill="#c9ccd1"/><path d="M1620 1007h10l-5 5.500z" fill="#c9ccd1"/><circle cx="1653" cy="1010" r="6.500" fill="none" stroke="#c9ccd1" stroke-width="4"/><g stroke="#c9ccd1" stroke-width="3.500"><path d="M1653 1010l10.50 0.00"/><path d="M1653 1010l7.42 7.42"/><path d="M1653 1010l-0.00 10.50"/><path d="M1653 1010l-7.42 7.42"/><path d="M1653 1010l-10.50 -0.00"/><path d="M1653 1010l-7.42 -7.42"/><path d="M1653 1010l0.00 -10.50"/><path d="M1653 1010l7.42 -7.42"/></g><circle cx="1653" cy="1010" r="3.200" fill="#3b4453"/><path d="M1673 1007h10l-5 5.500z" fill="#c9ccd1"/><path d="M1694 1010h20M1704 1000v20" stroke="#f4f4f4" stroke-width="2.300"/><rect x="1727.500" y="1000.500" width="7" height="7" fill="none" stroke="#c9ccd1" stroke-width="1.100"/><circle cx="1742.500" cy="1008.500" r="4" fill="none" stroke="#c9ccd1" stroke-width="1.100"/><path d="M1730 1019.500l4.500-7.500 4.500 7.500z" fill="none" stroke="#c9ccd1" stroke-width="1.100"/><path d="M1757 1001.500h20M1759 1007.500h16M1764 1002v6M1770 1002v6" stroke="#f4f4f4" stroke-width="1.500"/><rect x="1760.500" y="1011.500" width="13" height="7" rx="1.500" fill="none" stroke="#f4f4f4" stroke-width="1.500"/><path d="M1790 1002v5a3 3 0 0 0 6 0v-5M1793 1009v10" stroke="#c9ccd1" stroke-width="2.800" fill="none" stroke-linecap="round"/><path d="M1799 1009h9l-4.500 5z" fill="#c9ccd1"/><path d="M1824 1000h10l4 4v8h-14z" fill="#3f6fb5"/><path d="M1834 1000v4h4z" fill="#9dbce6"/><path d="M1824 1010c5 0 9 1 14 6v2h-14z" fill="#f0b429"/><circle cx="1828.500" cy="1006" r="2" fill="none" stroke="#fff" stroke-width=".900"/><path d="M1823 1006h11M1828.500 1001v10" stroke="#fff" stroke-width=".700"/><path d="M1835 1016l3 3 6-7" stroke="#32b85a" stroke-width="2" fill="none"/><rect x="1861.500" y="1002.500" width="19" height="14" fill="none" stroke="#c9ccd1" stroke-width="1.200"/><path d="M1872 1010l5-4.500M1873.500 1005h4v4M1870 1010l-5 4.500M1864.500 1011v4h4" stroke="#c9ccd1" stroke-width="1.200" fill="none"/><g fill="#e6e6e6"><rect x="1893" y="1001.500" width="20" height="2.200"/><rect x="1893" y="1009" width="20" height="2.200"/><rect x="1893" y="1016.500" width="20" height="2.200"/></g></svg>
<span class="t" style="left:72px;top:1002px;font-size:16px;line-height:16px;color:#ffffff;transform:scaleX(0.951);font-weight:700;">Model</span>
<span class="t" style="left:146px;top:1002px;font-size:16px;line-height:16px;color:#e3e6ea;transform:scaleX(0.896);">Layout1</span>
<span class="t" style="left:228px;top:1002px;font-size:16px;line-height:16px;color:#e3e6ea;transform:scaleX(0.914);">Layout2</span>
<span class="t" style="left:1148px;top:1004px;font-size:16px;line-height:16px;color:#ffffff;transform:scaleX(0.897);">MODEL</span>
<span class="t" style="left:1599px;top:1004px;font-size:16px;line-height:16px;color:#ffffff;transform:scaleX(0.765);">1:1</span>
<div style="left:1059px;top:241px;width:861px;height:744px;background:#f0f0f0;box-shadow:0 0 14px rgba(0,0,0,.38);"></div>
<div style="left:1059px;top:241px;width:861px;height:37px;background:#ffffff;"></div>
<svg style="left:0px;top:0px;" width="1920" height="330" viewBox="0 0 1920 330"><rect x="1070.500" y="252.500" width="7" height="6" fill="none" stroke="#1a1aff" stroke-width="1.400"/><path d="M1067 255.500h3M1078 255.500h3M1074 250v2M1074 259v2" stroke="#1a1aff" stroke-width="1.400"/><path d="M1082 251l4 0M1086 250l-3 5M1081 257l4-2" stroke="#1a1a8c" stroke-width="1.300"/><path d="M1080 256h5v3h-3v3" stroke="#c00000" stroke-width="1.600" fill="none"/><rect x="1081" y="265" width="2" height="2" fill="#c00000"/><circle cx="1084" cy="255" r="1" fill="#f0c000"/><rect x="1092.500" y="285.500" width="16" height="16" rx="1" fill="#fff" stroke="#1e1e1e" stroke-width="1.400"/><path d="M1093 289.500h15M1094 291l9 7" stroke="#1e1e1e" stroke-width="1.200"/><path d="M1104 293l5 1-4 8-2-4-3-1z" fill="#fff" stroke="#1e1e1e"/><rect x="1166.500" y="289.500" width="17" height="13" rx="1" fill="#f7f3a8" stroke="#b9b36a"/><path d="M1166 302.500h18" stroke="#9a9a9a" stroke-width="1.500"/><rect x="1177.500" y="296.500" width="4" height="4" fill="none" stroke="#b9b36a"/><path d="M1165 284l7 8M1172 284l-7 8M1168.500 283v10M1164 288h9" stroke="#c9c37a" stroke-width=".900"/><path d="M1212 307h8l-4 4.500z" fill="#000"/><path d="M1280 289.500h12M1286.500 284v11M1283 294.500h17M1285 296l6 6 6-6" stroke="#1e1e1e" stroke-width="1.300" fill="none"/><rect x="1293.500" y="284.500" width="5" height="7" fill="#fff" stroke="#1e1e1e" stroke-width="1.300"/><circle cx="1297" cy="300" r="2" fill="none" stroke="#1e1e1e"/><path d="M1392.500 284v8M1397 284l-4 4 4 4M1400 284.500h2v7" stroke="#1e1e1e" stroke-width="1.200" fill="none"/><path d="M1400.500 294v8M1405 294l-4 4 4 4M1407.500 295.500h4v3h-4v3.500h4" stroke="#1e1e1e" stroke-width="1.300" fill="none"/><path d="M1393 294v5h5M1396 297l2 2-2 2" stroke="#1a6fd6" stroke-width="1.200" fill="none"/><rect x="1480.500" y="288.500" width="13" height="10" fill="#fff" stroke="#1e1e1e" stroke-width="1.500"/><path d="M1487 284v4M1487 299v5" stroke="#1e1e1e" stroke-width="1.500"/><path d="M1487 286l2.500 4.500-2.500 6-2.500-6z" fill="#e02020"/><rect x="1604.500" y="284.500" width="19" height="5" fill="#fff" stroke="#1e1e1e"/><rect x="1604.5" y="289.500" width="19" height="13" fill="#fff" stroke="#1e1e1e" stroke-width="1.200"/><path d="M1604 302.500h4l1.500 2 1.500-2h6l1.500 2 1.500-2h4" stroke="#1e1e1e" fill="none"/><path d="M1612 294.500h9M1612 298.500h9" stroke="#2a9a2a" stroke-width="1.300"/><path d="M1606 300c0-5 2-7 6-7v-3l4 4.500-4 4.500v-3c-3 0-4 1-6 4z" fill="#1a1ad6"/><rect x="1748.5" y="289.500" width="19" height="13" fill="#fff" stroke="#1e1e1e" stroke-width="1.200"/><path d="M1748 302.500h4l1.500 2 1.500-2h6l1.500 2 1.500-2h4" stroke="#1e1e1e" fill="none"/><path d="M1756 294.500h9M1756 298.500h9" stroke="#2a9a2a" stroke-width="1.300"/><path d="M1750 300c0-5 2-7 6-7v-3l4 4.500-4 4.500v-3c-3 0-4 1-6 4z" fill="#1a1ad6"/><rect x="1875.500" y="286.500" width="12" height="14" rx="1" fill="#fff" stroke="#1e1e1e" stroke-width="1.500"/><path d="M1881.500 284v3M1881.500 300v4" stroke="#1e1e1e" stroke-width="1.500"/><rect x="1878" y="290" width="2" height="2" fill="#1e1e1e"/><rect x="1883" y="290" width="2" height="2" fill="#1e1e1e"/><rect x="1878" y="295" width="2" height="2" fill="#1e1e1e"/><rect x="1883" y="295" width="2" height="2" fill="#1e1e1e"/><path d="M1866 292.500h9M1870.500 288v9" stroke="#1a1aff" stroke-width="1.600"/></svg>
<span class="t" style="left:1093.7px;top:253px;font-size:16px;line-height:16px;color:#a2a2a2;transform:scaleX(0.922);">Equipamentos</span>
<span class="t" style="left:1066.3px;top:308px;font-size:16px;line-height:16px;color:#000;transform:scaleX(0.908);">Selecionar</span>
<span class="t" style="left:1152px;top:308px;font-size:16px;line-height:16px;color:#000;transform:scaleX(0.881);">Novo...</span>
<span class="t" style="left:1227.2px;top:308px;font-size:16px;line-height:16px;color:#000;transform:scaleX(0.948);">Adicionar contatos</span>
<span class="t" style="left:1363.4px;top:308px;font-size:16px;line-height:16px;color:#000;transform:scaleX(0.879);">Renomear...</span>
<span class="t" style="left:1451.2px;top:308px;font-size:16px;line-height:16px;color:#000;transform:scaleX(0.927);">Verificação</span>
<span class="t" style="left:1535.2px;top:308px;font-size:16px;line-height:16px;color:#000;transform:scaleX(0.943);">Modificar o fabricante...</span>
<span class="t" style="left:1703px;top:308px;font-size:16px;line-height:16px;color:#000;transform:scaleX(0.924);">Associa material</span>
<div style="left:1815px;top:300px;width:105px;height:30px;overflow:hidden;">
<span class="t" style="left:8px;top:8px;font-size:16px;line-height:16px;color:#000;transform:scaleX(0.931);">Adiciona auxiliar</span>
<div style="left:8px;top:22px;width:10px;height:1px;background:#000;"></div>
</div>
<div style="left:1070px;top:337px;width:256px;height:295px;background:#ffffff;border:1px solid #828790;"></div>
<div style="left:1304px;top:338px;width:21px;height:293px;background:#f0f0f0;"></div>
<div style="left:1305px;top:360px;width:18px;height:250px;background:#c1c1c1;"></div>
<div style="left:1097px;top:339px;width:91px;height:22px;background:#d9d9d9;"></div>
<svg style="left:0px;top:0px;" width="1920" height="640" viewBox="0 0 1920 640"><path d="M1304 0" /><path d="M1309.500 352.500l4.500-4.500 4.500 4.500" fill="none" stroke="#555" stroke-width="1.600"/><path d="M1085.500 352v150M1086 351.500h11" stroke="#808080" stroke-dasharray="1 1" fill="none"/><defs><g id="ti"><rect x="0" y="0" width="18" height="18" fill="#fff"/><g shape-rendering="crispEdges" stroke="#222" fill="none"><path d="M0 .5h18M0 17.500h18M.5 0v18M17.500 0v18" stroke-dasharray="1 1"/><path d="M1 1.500h16M1 16.500h16M1.500 1v16M16.500 1v16" stroke-dasharray="1 1" stroke-dashoffset="1" stroke="#444"/></g><rect x="4" y="4" width="2.500" height="2.500" fill="#e01010"/><rect x="9" y="4" width="6" height="2.200" fill="#1010e8"/><rect x="4" y="9" width="2.200" height="6" fill="#f0e010" stroke="#222" stroke-width=".500"/><rect x="9" y="9" width="5.500" height="5.500" fill="#109010"/><path d="M8.500 15h6.500v-6.500" fill="none" stroke="#111" stroke-width="1"/></g><g id="li"><rect x="1.200" y="4.400" width="12.600" height="8.200" fill="#fff" stroke="#111" stroke-width="1.600"/><path d="M7.500 -.2v4M7.500 13.100v4.600" stroke="#111" stroke-width="1.500"/></g></defs><use href="#ti" x="1100" y="341"/><use href="#ti" x="1100" y="363"/><path d="M1086 373.5h11" stroke="#808080" stroke-dasharray="1 1"/><use href="#ti" x="1100" y="385"/><path d="M1086 395.5h11" stroke="#808080" stroke-dasharray="1 1"/><use href="#ti" x="1100" y="407"/><path d="M1086 417.5h11" stroke="#808080" stroke-dasharray="1 1"/><use href="#ti" x="1100" y="429"/><path d="M1086 439.5h11" stroke="#808080" stroke-dasharray="1 1"/><use href="#ti" x="1100" y="451"/><path d="M1086 461.5h11" stroke="#808080" stroke-dasharray="1 1"/><use href="#ti" x="1100" y="473"/><path d="M1086 483.5h11" stroke="#808080" stroke-dasharray="1 1"/><use href="#ti" x="1100" y="495"/><path d="M1086 505.5h11" stroke="#808080" stroke-dasharray="1 1"/></svg>
<div style="left:1120px;top:338px;width:184px;height:293px;overflow:hidden;">
<span class="t" style="left:5.8px;top:6px;font-size:16px;line-height:16px;color:#000;transform:scaleX(0.928);">&lt;Todos&gt;</span>
<span class="t" style="left:5px;top:28px;font-size:16px;line-height:16px;color:#000;transform:scaleX(0.921);">[A] Complexos, unidades</span>
<span class="t" style="left:5px;top:50px;font-size:16px;line-height:16px;color:#000;transform:scaleX(0.932);">[F] Proteção limite de corrente</span>
<span class="t" style="left:5px;top:72px;font-size:16px;line-height:16px;color:#000;transform:scaleX(0.957);">[F] Dispositivos de proteção</span>
<span class="t" style="left:5px;top:94px;font-size:16px;line-height:16px;color:#000;transform:scaleX(0.919);">[K] Contatores</span>
<span class="t" style="left:5px;top:116px;font-size:16px;line-height:16px;color:#000;transform:scaleX(0.941);">[K] Relé instantâneo, contactor</span>
<span class="t" style="left:5px;top:138px;font-size:16px;line-height:16px;color:#000;transform:scaleX(0.907);">[K] Relés e contatores</span>
<span class="t" style="left:5px;top:160px;font-size:16px;line-height:16px;color:#000;transform:scaleX(0.946);">[S] Dispositivos de comando</span>
</div>
<div style="left:1333px;top:337px;width:278px;height:28px;background:#ffffff;border:1px solid #7a7a7a;"></div>
<span class="t" style="left:1336.8px;top:344px;font-size:16px;line-height:16px;color:#7d7d7d;transform:scaleX(0.843);">Pesquisar</span>
<svg style="left:1585px;top:338px;" width="26" height="26" viewBox="0 0 26 26"><circle cx="15" cy="9.500" r="5.500" fill="#f4f9fd" stroke="#6f9fcf" stroke-width="1.800"/><path d="M11 14l-6 7" stroke="#4f86c0" stroke-width="3" stroke-linecap="round"/></svg>
<div style="left:1895px;top:340px;width:25px;height:30px;overflow:hidden;">
<span class="t" style="left:5px;top:7px;font-size:16px;line-height:16px;color:#000;">Dimensões</span>
<div style="left:5px;top:21.5px;width:9px;height:1px;background:#000;"></div>
</div>
<div style="left:1333px;top:368px;width:600px;height:263px;background:#ffffff;border:1px solid #828790;"></div>
<div style="left:1414px;top:371px;width:1px;height:25px;background:#e5e5e5;"></div>
<div style="left:1474px;top:371px;width:1px;height:25px;background:#e5e5e5;"></div>
<div style="left:1564px;top:371px;width:1px;height:25px;background:#e5e5e5;"></div>
<div style="left:1654px;top:371px;width:1px;height:25px;background:#e5e5e5;"></div>
<div style="left:1904px;top:371px;width:1px;height:25px;background:#e5e5e5;"></div>
<span class="t" style="left:1341px;top:377px;font-size:16px;line-height:16px;color:#000;transform:scaleX(0.901);">Sigla</span>
<span class="t" style="left:1421.2px;top:377px;font-size:16px;line-height:16px;color:#000;transform:scaleX(0.913);">Grupo</span>
<span class="t" style="left:1481.3px;top:377px;font-size:16px;line-height:16px;color:#000;transform:scaleX(0.911);">Localização</span>
<span class="t" style="left:1571.2px;top:377px;font-size:16px;line-height:16px;color:#000;transform:scaleX(0.866);">Função</span>
<span class="t" style="left:1661.6px;top:377px;font-size:16px;line-height:16px;color:#000;transform:scaleX(0.9);">Descrição</span>
<span class="t" style="left:1911px;top:377px;font-size:16px;line-height:16px;color:#000;">Pe</span>
<span class="t" style="left:1361.4px;top:402px;font-size:16px;line-height:16px;color:#000;transform:scaleX(0.827);">96K1</span>
<span class="t" style="left:1361.4px;top:426px;font-size:16px;line-height:16px;color:#000;transform:scaleX(0.857);">96K2</span>
<span class="t" style="left:1361.4px;top:450px;font-size:16px;line-height:16px;color:#000;transform:scaleX(0.826);">97F2</span>
<span class="t" style="left:1361.4px;top:474px;font-size:16px;line-height:16px;color:#000;transform:scaleX(0.827);">98K1</span>
<span class="t" style="left:1361.4px;top:498px;font-size:16px;line-height:16px;color:#000;transform:scaleX(0.857);">98K2</span>
<svg style="left:0px;top:0px;" width="1920" height="640" viewBox="0 0 1920 640"><use href="#li" x="1341" y="399.5"/><use href="#li" x="1341" y="423.5"/><use href="#li" x="1341" y="447.5"/><use href="#li" x="1341" y="471.5"/><use href="#li" x="1341" y="495.5"/></svg>
<div style="left:1334px;top:588px;width:586px;height:24px;background:#d9d9d9;"></div>
<span class="t" style="left:1367.5px;top:594px;font-size:16px;line-height:16px;color:#000;">108.1</span>
<span class="t" style="left:1661px;top:594px;font-size:16px;line-height:16px;color:#000;transform:scaleX(0.797);">SLOT 3</span>
<span class="t" style="left:1911.5px;top:594px;font-size:16px;line-height:16px;color:#000;">10</span>
<div style="left:1334px;top:612px;width:586px;height:18px;overflow:hidden;">
<span class="t" style="left:33.5px;top:6px;font-size:16px;line-height:16px;color:#000;">108.2</span>
<span class="t" style="left:327px;top:6px;font-size:16px;line-height:16px;color:#000;transform:scaleX(0.797);">SLOT 4</span>
<span class="t" style="left:577.5px;top:6px;font-size:16px;line-height:16px;color:#000;">10</span>
</div>
<div style="left:1274px;top:641px;width:660px;height:151px;background:#ffffff;border:1px solid #828790;"></div>
<div style="left:1395px;top:643px;width:1px;height:26px;background:#e5e5e5;"></div>
<div style="left:1495px;top:643px;width:1px;height:26px;background:#e5e5e5;"></div>
<div style="left:1595px;top:643px;width:1px;height:26px;background:#e5e5e5;"></div>
<div style="left:1695px;top:643px;width:1px;height:26px;background:#e5e5e5;"></div>
<div style="left:1795px;top:643px;width:1px;height:26px;background:#e5e5e5;"></div>
<div style="left:1895px;top:643px;width:1px;height:26px;background:#e5e5e5;"></div>
<span class="t" style="left:1282px;top:650px;font-size:16px;line-height:16px;color:#000;transform:scaleX(0.903);">Formação</span>
<span class="t" style="left:1402px;top:650px;font-size:16px;line-height:16px;color:#000;transform:scaleX(0.963);">Código</span>
<span class="t" style="left:1502.1px;top:650px;font-size:16px;line-height:16px;color:#000;transform:scaleX(0.898);">Fabricante</span>
<span class="t" style="left:1602.2px;top:650px;font-size:16px;line-height:16px;color:#000;transform:scaleX(0.996);">Artigo</span>
<span class="t" style="left:1702px;top:650px;font-size:16px;line-height:16px;color:#000;transform:scaleX(0.878);">Série</span>
<span class="t" style="left:1802px;top:650px;font-size:16px;line-height:16px;color:#000;transform:scaleX(0.936);">Comando</span>
<div style="left:1276px;top:669px;width:620px;height:24px;background:#d9d9d9;"></div>
<svg style="left:1279px;top:673px;" width="22" height="18" viewBox="0 0 22 18"><rect x="2.500" y="3.500" width="9" height="9" fill="#fff" stroke="#111" stroke-width="1.500"/><path d="M0 8h2.500M11.500 8h2M7 0v3.500M7 12.500v3.500" stroke="#111" stroke-width="1.400"/><path d="M15 1l4 1M19.500 2l-2 6M15.500 8l3.500-1.500M17.500 8l-1.500 7" stroke="#111" stroke-width="1.300" fill="none"/></svg>
<span class="t" style="left:1300.5px;top:675px;font-size:16px;line-height:16px;color:#000;transform:scaleX(0.891);">Formação n...</span>
<span class="t" style="left:1402px;top:676px;font-size:16px;line-height:16px;color:#000;">|</span>
<span class="t" style="left:1802px;top:676px;font-size:16px;line-height:16px;color:#000;transform:scaleX(0.841);">PLCM0013</span>
<span class="t" style="left:1070.6px;top:645px;font-size:16px;line-height:16px;color:#000;transform:scaleX(0.937);">Bloco de comando:</span>
<div style="left:1070px;top:662px;width:193px;height:130px;background:#ffffff;border:2px solid;border-color:#a0a0a0 #e8e8e8 #e8e8e8 #a0a0a0;"></div>
<svg style="left:0px;top:0px;" width="1920" height="800" viewBox="0 0 1920 800"><g stroke="#000" stroke-width="1.300" fill="none"><rect x="1102.500" y="697.500" width="127" height="31"/><path d="M1118.5 690v7.500M1118.5 728.500v8"/><path d="M1150.5 690v7.500M1150.5 728.500v8"/><path d="M1182.5 690v7.500M1182.5 728.500v8"/><path d="M1214.5 690v7.500M1214.5 728.500v8"/></g></svg>
<span class="t" style="left:1106.8px;top:674px;font-size:16px;line-height:16px;color:#000;transform:scaleX(0.862);">1L+</span>
<span class="t" style="left:1109px;top:743px;font-size:16px;line-height:16px;color:#000;transform:scaleX(0.871);">1M</span>
<span class="t" style="left:1147.2px;top:674px;font-size:16px;line-height:16px;color:#000;transform:scaleX(0.743);">?</span>
<span class="t" style="left:1147.2px;top:743px;font-size:16px;line-height:16px;color:#000;transform:scaleX(0.743);">?</span>
<span class="t" style="left:1179.2px;top:674px;font-size:16px;line-height:16px;color:#000;transform:scaleX(0.743);">?</span>
<span class="t" style="left:1179.2px;top:743px;font-size:16px;line-height:16px;color:#000;transform:scaleX(0.743);">?</span>
<span class="t" style="left:1211.2px;top:674px;font-size:16px;line-height:16px;color:#000;transform:scaleX(0.743);">?</span>
<span class="t" style="left:1211.2px;top:743px;font-size:16px;line-height:16px;color:#000;transform:scaleX(0.743);">?</span>
<span class="t" style="left:1142.8px;top:767px;font-size:16px;line-height:16px;color:#1a1aff;transform:scaleX(0.909);">101/B2</span>
<div style="left:1070px;top:801px;width:864px;height:143px;background:#ffffff;border:1px solid #828790;"></div>
<div style="left:1071px;top:922px;width:849px;height:21px;background:#f0f0f0;"></div>
<div style="left:1093px;top:923px;width:21px;height:19px;background:#cdcdcd;"></div>
<div style="left:1072px;top:803px;width:60.5px;height:113.5px;background:#cce4f7;"></div>
<svg style="left:0px;top:0px;" width="1920" height="950" viewBox="0 0 1920 950"><path d="M1084.500 927.500l-5.500 4.500 5.500 4.500" fill="none" stroke="#555" stroke-width="1.800"/><defs><g id="lamp" stroke="#000" stroke-width="1.350" fill="none"><path d="M0 -21v10.500M0 10.500v10.500M-5.900 -5.900l11.800 11.800M5.900 -5.900l-11.800 11.800"/><circle cx="0" cy="0" r="10.500"/></g></defs><use href="#lamp" x="1101" y="848"/><path d="M1132.5 803v71M1132.5 900v16" stroke="#e6e6e6"/><use href="#lamp" x="1162" y="848"/><path d="M1193.5 803v71M1193.5 900v16" stroke="#e6e6e6"/><use href="#lamp" x="1223" y="848"/><path d="M1254.5 803v71M1254.5 900v16" stroke="#e6e6e6"/><use href="#lamp" x="1284" y="848"/><path d="M1315.5 803v71M1315.5 900v16" stroke="#e6e6e6"/><use href="#lamp" x="1345" y="848"/><path d="M1376.5 803v71M1376.5 900v16" stroke="#e6e6e6"/><use href="#lamp" x="1406" y="848"/><path d="M1437.5 803v71M1437.5 900v16" stroke="#e6e6e6"/><use href="#lamp" x="1467" y="848"/><path d="M1498.5 803v71M1498.5 900v16" stroke="#e6e6e6"/><use href="#lamp" x="1528" y="848"/><path d="M1559.5 803v71M1559.5 900v16" stroke="#e6e6e6"/><use href="#lamp" x="1589" y="848"/><path d="M1620.5 803v71M1620.5 900v16" stroke="#e6e6e6"/><use href="#lamp" x="1650" y="848"/><path d="M1681.5 803v71M1681.5 900v16" stroke="#e6e6e6"/><use href="#lamp" x="1711" y="848"/><path d="M1742.5 803v71M1742.5 900v16" stroke="#e6e6e6"/><use href="#lamp" x="1772" y="848"/><path d="M1803.5 803v71M1803.5 900v16" stroke="#e6e6e6"/><use href="#lamp" x="1833" y="848"/><path d="M1864.5 803v71M1864.5 900v16" stroke="#e6e6e6"/><use href="#lamp" x="1894" y="848"/></svg>
<div style="left:1072px;top:803px;width:60.5px;height:118px;overflow:hidden;">
<span class="t" style="left:32px;top:2px;font-size:17.5px;line-height:17.5px;color:#000;transform:scaleX(0.992);">02</span>
<span class="t" style="left:20.9px;top:76px;font-size:18px;line-height:18px;color:#000;transform:scaleX(0.927);">E68.0</span>
<span class="t" style="left:5.45px;top:97px;font-size:18px;line-height:18px;color:#1a1aff;transform:scaleX(0.993);">27/C2</span>
</div>
<div style="left:1133px;top:803px;width:60.5px;height:118px;overflow:hidden;">
<span class="t" style="left:32px;top:2px;font-size:17.5px;line-height:17.5px;color:#000;transform:scaleX(0.992);">03</span>
<span class="t" style="left:20.9px;top:76px;font-size:18px;line-height:18px;color:#000;transform:scaleX(0.927);">E68.1</span>
<span class="t" style="left:5.45px;top:97px;font-size:18px;line-height:18px;color:#1a1aff;transform:scaleX(0.993);">27/C3</span>
</div>
<div style="left:1194px;top:803px;width:60.5px;height:118px;overflow:hidden;">
<span class="t" style="left:32px;top:2px;font-size:17.5px;line-height:17.5px;color:#000;transform:scaleX(0.992);">04</span>
<span class="t" style="left:20.9px;top:76px;font-size:18px;line-height:18px;color:#000;transform:scaleX(0.927);">E68.2</span>
<span class="t" style="left:5.45px;top:97px;font-size:18px;line-height:18px;color:#1a1aff;transform:scaleX(0.993);">27/C4</span>
</div>
<div style="left:1255px;top:803px;width:60.5px;height:118px;overflow:hidden;">
<span class="t" style="left:32px;top:2px;font-size:17.5px;line-height:17.5px;color:#000;transform:scaleX(0.992);">05</span>
<span class="t" style="left:20.9px;top:76px;font-size:18px;line-height:18px;color:#000;transform:scaleX(0.927);">E68.3</span>
<span class="t" style="left:1.5px;top:97px;font-size:18px;line-height:18px;color:#1a1aff;transform:scaleX(0.975);">103/B2</span>
</div>
<div style="left:1316px;top:803px;width:60.5px;height:118px;overflow:hidden;">
<span class="t" style="left:32px;top:2px;font-size:17.5px;line-height:17.5px;color:#000;transform:scaleX(0.992);">06</span>
<span class="t" style="left:20.9px;top:76px;font-size:18px;line-height:18px;color:#000;transform:scaleX(0.927);">E68.4</span>
<span class="t" style="left:1.5px;top:97px;font-size:18px;line-height:18px;color:#1a1aff;transform:scaleX(0.975);">103/B2</span>
</div>
<div style="left:1377px;top:803px;width:60.5px;height:118px;overflow:hidden;">
<span class="t" style="left:32px;top:2px;font-size:17.5px;line-height:17.5px;color:#000;transform:scaleX(0.992);">07</span>
<span class="t" style="left:20.9px;top:76px;font-size:18px;line-height:18px;color:#000;transform:scaleX(0.927);">E68.5</span>
<span class="t" style="left:5.45px;top:97px;font-size:18px;line-height:18px;color:#1a1aff;transform:scaleX(0.993);">37/C3</span>
</div>
<div style="left:1438px;top:803px;width:60.5px;height:118px;overflow:hidden;">
<span class="t" style="left:32px;top:2px;font-size:17.5px;line-height:17.5px;color:#000;transform:scaleX(0.992);">08</span>
<span class="t" style="left:20.9px;top:76px;font-size:18px;line-height:18px;color:#000;transform:scaleX(0.927);">E68.6</span>
<span class="t" style="left:1.5px;top:97px;font-size:18px;line-height:18px;color:#1a1aff;transform:scaleX(0.975);">103/B3</span>
</div>
<div style="left:1499px;top:803px;width:60.5px;height:118px;overflow:hidden;">
<span class="t" style="left:32px;top:2px;font-size:17.5px;line-height:17.5px;color:#000;transform:scaleX(0.992);">09</span>
<span class="t" style="left:20.9px;top:76px;font-size:18px;line-height:18px;color:#000;transform:scaleX(0.927);">E68.7</span>
<span class="t" style="left:5.45px;top:97px;font-size:18px;line-height:18px;color:#1a1aff;transform:scaleX(0.993);">47/C3</span>
</div>
<div style="left:1560px;top:803px;width:60.5px;height:118px;overflow:hidden;">
<span class="t" style="left:32px;top:2px;font-size:17.5px;line-height:17.5px;color:#000;transform:scaleX(0.992);">12</span>
<span class="t" style="left:20.9px;top:76px;font-size:18px;line-height:18px;color:#000;transform:scaleX(0.927);">E69.0</span>
<span class="t" style="left:1.5px;top:97px;font-size:18px;line-height:18px;color:#1a1aff;transform:scaleX(0.975);">103/B4</span>
</div>
<div style="left:1621px;top:803px;width:60.5px;height:118px;overflow:hidden;">
<span class="t" style="left:32px;top:2px;font-size:17.5px;line-height:17.5px;color:#000;transform:scaleX(0.992);">13</span>
<span class="t" style="left:20.9px;top:76px;font-size:18px;line-height:18px;color:#000;transform:scaleX(0.927);">E69.1</span>
<span class="t" style="left:5.45px;top:97px;font-size:18px;line-height:18px;color:#1a1aff;transform:scaleX(0.993);">57/C2</span>
</div>
<div style="left:1682px;top:803px;width:60.5px;height:118px;overflow:hidden;">
<span class="t" style="left:32px;top:2px;font-size:17.5px;line-height:17.5px;color:#000;transform:scaleX(0.992);">14</span>
<span class="t" style="left:20.9px;top:76px;font-size:18px;line-height:18px;color:#000;transform:scaleX(0.927);">E69.2</span>
<span class="t" style="left:1.5px;top:97px;font-size:18px;line-height:18px;color:#1a1aff;transform:scaleX(0.975);">103/B5</span>
</div>
<div style="left:1743px;top:803px;width:60.5px;height:118px;overflow:hidden;">
<span class="t" style="left:32px;top:2px;font-size:17.5px;line-height:17.5px;color:#000;transform:scaleX(0.992);">15</span>
<span class="t" style="left:20.9px;top:76px;font-size:18px;line-height:18px;color:#000;transform:scaleX(0.927);">E69.3</span>
<span class="t" style="left:1.5px;top:97px;font-size:18px;line-height:18px;color:#1a1aff;transform:scaleX(0.975);">103/B6</span>
</div>
<div style="left:1804px;top:803px;width:60.5px;height:118px;overflow:hidden;">
<span class="t" style="left:32px;top:2px;font-size:17.5px;line-height:17.5px;color:#000;transform:scaleX(0.992);">16</span>
<span class="t" style="left:20.9px;top:76px;font-size:18px;line-height:18px;color:#000;transform:scaleX(0.927);">E69.4</span>
<span class="t" style="left:1.5px;top:97px;font-size:18px;line-height:18px;color:#1a1aff;transform:scaleX(0.975);">103/B6</span>
</div>
<div style="left:1865px;top:803px;width:55px;height:118px;overflow:hidden;">
<span class="t" style="left:32px;top:2px;font-size:17.5px;line-height:17.5px;color:#000;transform:scaleX(0.992);">17</span>
<span class="t" style="left:20.9px;top:76px;font-size:18px;line-height:18px;color:#000;transform:scaleX(0.927);">E69.5</span>
<span class="t" style="left:5.45px;top:97px;font-size:18px;line-height:18px;color:#1a1aff;transform:scaleX(0.993);">64/C2</span>
</div>
<div style="left:1071px;top:952px;width:104px;height:27px;background:#e1e1e1;border:1px solid #adadad;"></div>
<span class="t" style="left:1119.3px;top:959px;font-size:16px;line-height:16px;color:#000;transform:scaleX(0.743);">?</span>
<div style="left:971px;top:501px;width:422px;height:136px;background:#f0f0f0;box-shadow:0 4px 22px rgba(0,0,0,.36),0 0 0 1px rgba(60,60,60,.6);"></div>
<div style="left:971px;top:501px;width:422px;height:37px;background:#ffffff;"></div>
<span class="t" style="left:980px;top:513px;font-size:16px;line-height:16px;color:#000;transform:scaleX(0.926);">Sigla régua de bornes</span>
<svg style="left:1360px;top:508px;" width="24" height="24" viewBox="0 0 24 24"><path d="M6 5.500l12 12M18 5.500l-12 12" stroke="#111" stroke-width="1.200"/></svg>
<span class="t" style="left:982px;top:561px;font-size:16px;line-height:16px;color:#000;transform:scaleX(0.916);">Sigla régua de bornes:</span>
<div style="left:1129px;top:553px;width:250px;height:28px;background:#ffffff;border:1px solid #0078d7;"></div>
<span class="t" style="left:1132px;top:560px;font-size:16px;line-height:16px;color:#000;transform:scaleX(0.9);">XA6-4</span>
<div style="left:1173px;top:556px;width:1px;height:19px;background:#000;"></div>
<svg style="left:1360px;top:560px;" width="16" height="14" viewBox="0 0 16 14"><path d="M3.500 5l4.500 4.500 4.500-4.500" fill="none" stroke="#444" stroke-width="1.200"/></svg>
<div style="left:982px;top:593px;width:396px;height:1px;background:#a0a0a0;"></div>
<div style="left:982px;top:594px;width:396px;height:2px;background:#ffffff;"></div>
<div style="left:982px;top:593px;width:1px;height:3px;background:#a0a0a0;"></div>
<div style="left:1162px;top:604px;width:103px;height:27px;background:#e1e1e1;border:2px solid #0078d7;"></div>
<div style="left:1275px;top:604px;width:103px;height:27px;background:#e1e1e1;border:1px solid #adadad;"></div>
<span class="t" style="left:1203px;top:610px;font-size:16px;line-height:16px;color:#000;transform:scaleX(0.866);">OK</span>
<span class="t" style="left:1298px;top:610px;font-size:16px;line-height:16px;color:#000;transform:scaleX(0.89);">Cancelar</span>
<div style="left:1919px;top:0px;width:1px;height:197px;background:#ffffff;"></div>
<div style="left:1919px;top:197px;width:1px;height:44px;background:#707070;"></div>
<div style="left:1919px;top:985px;width:1px;height:20px;background:#8a8a8a;"></div>
<div style="left:1919px;top:1005px;width:1px;height:23px;background:#ffffff;"></div>
</div></body></html>
